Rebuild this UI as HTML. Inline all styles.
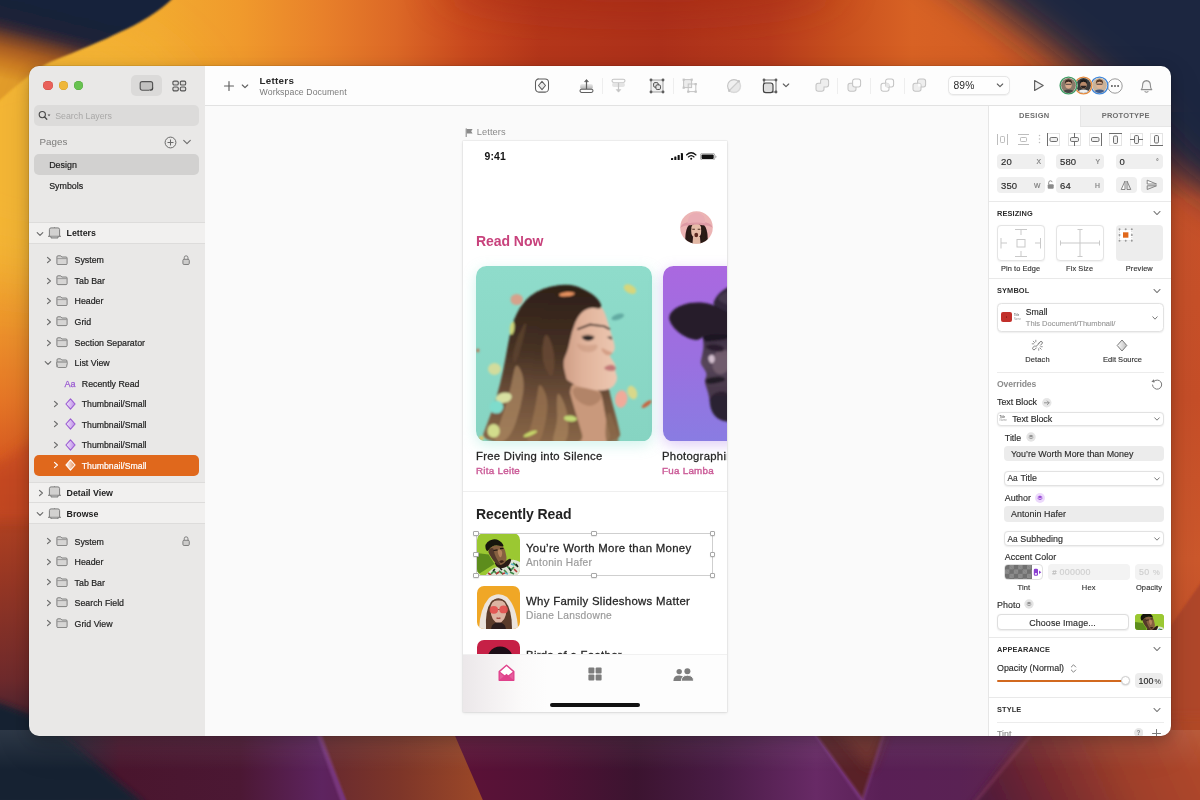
<!DOCTYPE html><html lang="en"><head><meta charset="utf-8"><title>Letters — Sketch</title><style>

html,body{margin:0;padding:0}
body{width:1200px;height:800px;overflow:hidden;position:relative;background:#7a2a30;font-family:"Liberation Sans",sans-serif;}
.b{position:absolute;display:block;box-sizing:border-box}
.t{position:absolute;white-space:nowrap;line-height:1;font-family:"Liberation Sans",sans-serif}
#win{will-change:transform;position:absolute;left:0;top:0;width:1200px;height:800px;clip-path:inset(66px 29px 64px 29px round 10px)}
#shadow{position:absolute;left:29px;top:66px;width:1142px;height:670px;border-radius:10px;box-shadow:0 0 0 .5px rgba(0,0,0,.14),0 4px 14px rgba(0,0,0,.2),0 12px 36px rgba(0,0,0,.12)}

</style></head><body>
<svg id="wall" class="b" style="left:0;top:0" width="1200" height="800" viewBox="0 0 1200 800">
<defs>
 <filter id="bl30" x="-40%" y="-40%" width="180%" height="180%"><feGaussianBlur stdDeviation="30"/></filter>
 <filter id="bl20" x="-40%" y="-40%" width="180%" height="180%"><feGaussianBlur stdDeviation="20"/></filter>
 <filter id="bl14" x="-40%" y="-40%" width="180%" height="180%"><feGaussianBlur stdDeviation="14"/></filter>
 <filter id="bl6" x="-20%" y="-20%" width="140%" height="140%"><feGaussianBlur stdDeviation="6"/></filter>
 <filter id="bl4" x="-20%" y="-30%" width="140%" height="160%"><feGaussianBlur stdDeviation="3.5"/></filter>
 <filter id="bl2" x="-10%" y="-10%" width="120%" height="120%"><feGaussianBlur stdDeviation="1.2"/></filter>
 <linearGradient id="gtop" gradientUnits="userSpaceOnUse" x1="0" y1="0" x2="1200" y2="0">
  <stop offset="0" stop-color="#f2b033"/><stop offset=".13" stop-color="#f2aa30"/><stop offset=".2" stop-color="#f09a2c"/>
  <stop offset=".27" stop-color="#e8802a"/><stop offset=".33" stop-color="#dc6826"/><stop offset=".39" stop-color="#c8481e"/>
  <stop offset=".45" stop-color="#b4361a"/><stop offset=".55" stop-color="#ac301a"/><stop offset=".64" stop-color="#b63a1c"/>
  <stop offset=".7" stop-color="#c8501e"/><stop offset=".76" stop-color="#d86224"/><stop offset=".82" stop-color="#d45e24"/><stop offset="1" stop-color="#c04a24"/>
 </linearGradient>
 <linearGradient id="gleft" gradientUnits="userSpaceOnUse" x1="0" y1="0" x2="0" y2="800">
  <stop offset="0" stop-color="#f2b234"/><stop offset=".3" stop-color="#f2ae32"/><stop offset=".4" stop-color="#ee962c"/>
  <stop offset=".5" stop-color="#e67626"/><stop offset=".57" stop-color="#d85c22"/><stop offset=".6" stop-color="#c04820"/>
  <stop offset=".72" stop-color="#9a3824"/><stop offset=".85" stop-color="#6e2a2c"/><stop offset=".895" stop-color="#4c2430"/><stop offset=".93" stop-color="#222636"/><stop offset=".96" stop-color="#1d2838"/>
 </linearGradient>
 <linearGradient id="gnavyL" gradientUnits="userSpaceOnUse" x1="25" y1="0" x2="0" y2="100">
  <stop offset="0" stop-color="#18213a"/><stop offset=".2" stop-color="#1b2238"/><stop offset=".3" stop-color="#3a2a34"/>
  <stop offset=".4" stop-color="#7a4428"/><stop offset=".5" stop-color="#aa5e22"/><stop offset=".62" stop-color="#c87822"/><stop offset=".8" stop-color="#e29c2a"/>
 </linearGradient>
 <linearGradient id="gright" gradientUnits="userSpaceOnUse" x1="0" y1="0" x2="0" y2="800">
  <stop offset="0" stop-color="#1a2440"/><stop offset=".13" stop-color="#1c2540"/><stop offset=".19" stop-color="#6a3434"/><stop offset=".25" stop-color="#c8522a"/>
  <stop offset=".5" stop-color="#c64e28"/><stop offset=".7" stop-color="#cc582c"/><stop offset="1" stop-color="#b04226"/>
 </linearGradient>
 <linearGradient id="gbot" gradientUnits="userSpaceOnUse" x1="0" y1="0" x2="1200" y2="0">
  <stop offset="0" stop-color="#1d2838"/><stop offset=".05" stop-color="#222536"/><stop offset=".1" stop-color="#4a162e"/>
  <stop offset=".2" stop-color="#4c1834"/><stop offset=".268" stop-color="#5e2460"/>
  <stop offset=".375" stop-color="#5e1238"/><stop offset=".45" stop-color="#521236"/>
  <stop offset=".53" stop-color="#3c1430"/><stop offset=".6" stop-color="#4a1c46"/><stop offset=".68" stop-color="#682a66"/>
  <stop offset=".735" stop-color="#5a2056"/><stop offset=".8" stop-color="#5a2254"/><stop offset=".87" stop-color="#62264c"/><stop offset="1" stop-color="#62264c"/>
 </linearGradient>
 <linearGradient id="gband" gradientUnits="userSpaceOnUse" x1="320" y1="0" x2="480" y2="0"><stop offset="0" stop-color="#682a30"/><stop offset=".5" stop-color="#7e3629"/><stop offset="1" stop-color="#9c4828"/></linearGradient>
 <linearGradient id="gbr" gradientUnits="userSpaceOnUse" x1="985" y1="810" x2="1190" y2="715"><stop offset="0" stop-color="#4e1a3c"/><stop offset=".3" stop-color="#74292f"/><stop offset=".65" stop-color="#a0402b"/><stop offset="1" stop-color="#b24828"/></linearGradient>
 <linearGradient id="ghaze" x1="0" y1="0" x2="0" y2="1"><stop offset="0" stop-color="#fff" stop-opacity=".10"/><stop offset="1" stop-color="#fff" stop-opacity="0"/></linearGradient>
</defs>
<rect width="1200" height="800" fill="#c8481e"/>
<rect x="0" y="0" width="150" height="800" fill="url(#gleft)"/>
<rect x="1100" y="0" width="100" height="800" fill="url(#gright)"/>
<!-- lower right curve -->
<path d="M1120 800 L1120 700 Q1160 640 1210 570 L1210 800Z" fill="#b0462a" filter="url(#bl2)"/>
<rect x="0" y="0" width="1200" height="112" fill="url(#gtop)"/>
<ellipse cx="40" cy="150" rx="150" ry="120" fill="#f4b636" filter="url(#bl30)"/>
<ellipse cx="640" cy="-14" rx="200" ry="30" fill="#a62c18" filter="url(#bl20)" opacity=".55"/>
<!-- left lower orange curve -->
<path d="M-10 470 Q20 450 60 420 L60 520 L-10 520Z" fill="#c84a20" filter="url(#bl6)" opacity=".7"/>
<!-- navy top-left -->
<path d="M-5 -5 L176 -5 C160 12 138 24 120 32 C104 40 80 50 50 62 C34 70 16 86 -5 104Z" fill="url(#gnavyL)" filter="url(#bl2)"/>
<!-- navy top-right -->
<path d="M905 -60 L1300 -60 L1300 250 L1185 172 C1130 105 1040 40 905 -60Z" fill="#1b2540" filter="url(#bl20)"/>
<!-- bottom band -->
<rect x="0" y="722" width="1200" height="80" fill="url(#gbot)"/>
<path d="M-10 700 L-10 805 L146 805 L62 736 L34 716 L8 706Z" fill="#172132" filter="url(#bl4)"/>
<path d="M313 722 L449 722 L485 805 L348 805Z" fill="url(#gband)"/>
<path d="M312 722 L317 722 L348 805 L342 805Z" fill="#84408a" filter="url(#bl2)" opacity=".7"/>
<path d="M806 722 L888 722 L863 800Z" fill="#5a2228"/>
<path d="M830 722 L888 722 L870 770Z" fill="#6e2e2a" filter="url(#bl6)"/>
<path d="M805 722 L808 722 L866 802 L861 802Z" fill="#84408a" filter="url(#bl2)" opacity=".6"/>
<path d="M886 722 L889 722 L864 802 L860 802Z" fill="#7a3a7a" filter="url(#bl2)" opacity=".6"/>
<path d="M1040 716 L1215 716 L1215 812 L966 812Z" fill="url(#gbr)" filter="url(#bl4)"/>
<path d="M1040 722 L1044 722 L975 805 L970 805Z" fill="#9a4a6a" filter="url(#bl2)" opacity=".3"/>
<rect x="0" y="730" width="1200" height="40" fill="url(#ghaze)"/>
</svg>
<div id="shadow"></div><div id="win">
<div class="b" style="left:29px;top:66px;width:176px;height:670px;background:#e9e8e7;"></div>
<div class="b" style="left:43.4px;top:80.6px;width:9.8px;height:9.8px;border-radius:50%;background:#e9615a;box-shadow:inset 0 0 0 .5px #cf4a41"></div>
<div class="b" style="left:58.5px;top:80.6px;width:9.8px;height:9.8px;border-radius:50%;background:#efb73a;box-shadow:inset 0 0 0 .5px #d59f27"></div>
<div class="b" style="left:73.6px;top:80.6px;width:9.8px;height:9.8px;border-radius:50%;background:#68c250;box-shadow:inset 0 0 0 .5px #4fa63c"></div>
<div class="b" style="left:130.5px;top:75px;width:31.5px;height:20.5px;background:#dbdad9;border-radius:5px;"></div>
<svg class="b" style="left:139px;top:79.5px;" width="15" height="12" viewBox="0 0 15 12"><rect x="1.2" y="1.6" width="12.4" height="8.6" rx="2" fill="#c2c1c0" stroke="#555" stroke-width="1.15"/><path d="M10.3 10.8 H13 Q14.3 10.8 14.3 9.5 V7.8" fill="none" stroke="#dbdad9" stroke-width="1.6"/><path d="M10.6 10.2 H11.8 Q13.6 10.2 13.6 8.4 V7.6" fill="none" stroke="#444" stroke-width="1.3"/></svg>
<svg class="b" style="left:171.5px;top:79.5px;" width="15" height="12" viewBox="0 0 15 12"><g fill="#dcdbda" stroke="#555" stroke-width="1.1"><rect x=".9" y="1.1" width="5.4" height="3.9" rx="1.3"/><rect x="8.3" y="1.1" width="5.4" height="3.9" rx="1.3"/><rect x=".9" y="7" width="5.4" height="3.9" rx="1.3"/><rect x="8.3" y="7" width="5.4" height="3.9" rx="1.3"/></g></svg>
<div class="b" style="left:34px;top:105px;width:165px;height:21px;background:#dcdbda;border-radius:5px;"></div>
<svg class="b" style="left:37.5px;top:110px;" width="14" height="11" viewBox="0 0 14 11"><circle cx="4.3" cy="4.6" r="3.1" fill="none" stroke="#4a4a4a" stroke-width="1.15"/><path d="M6.6 7 L8.8 9.3" stroke="#4a4a4a" stroke-width="1.25" stroke-linecap="round"/><path d="M9.6 4.6 L12.4 4.6 L11 6.3Z" fill="#4a4a4a"/></svg>
<div class="t" style="left:55.2px;top:112px;font-size:8.8px;color:#a9a8a7;">Search Layers</div>
<div class="t" style="left:39.5px;top:137px;font-size:9.8px;color:#7c7b7a;">Pages</div>
<svg class="b" style="left:163.5px;top:135.5px;" width="13" height="13" viewBox="0 0 13 13"><circle cx="6.5" cy="6.5" r="5.4" fill="none" stroke="#6a6a6a" stroke-width="1"/><path d="M6.5 3.9 V9.1 M3.9 6.5 H9.1" stroke="#6a6a6a" stroke-width="1" stroke-linecap="round"/></svg>
<svg class="b" style="left:181.5px;top:138.2px;" width="10" height="8" viewBox="0 0 10 8"><path d="M1.7000000000000002 2.3 L5 5.7 L8.3 2.3" fill="none" stroke="#6a6a6a" stroke-width="1.05" stroke-linecap="round" stroke-linejoin="round"/></svg>
<div class="b" style="left:34px;top:154px;width:165px;height:20.5px;background:#d2d1d0;border-radius:5px;"></div>
<div class="t" style="left:49.2px;top:161px;font-size:8.9px;color:#222;-webkit-text-stroke:.2px #222;">Design</div>
<div class="t" style="left:49.2px;top:182px;font-size:8.9px;color:#222;-webkit-text-stroke:.2px #222;">Symbols</div>
<div class="b" style="left:29px;top:222px;width:176px;height:21.5px;background:#f1f0ef;border-top:1px solid #dddcdb;border-bottom:1px solid #dddcdb;"></div>
<svg class="b" style="left:35.2px;top:229.55px;" width="10" height="8" viewBox="0 0 10 8"><path d="M2.2 2.55 L5 5.45 L7.8 2.55" fill="none" stroke="#6b6b6b" stroke-width="1.15" stroke-linecap="round" stroke-linejoin="round"/></svg>
<svg class="b" style="left:48.2px;top:227.05px;" width="13" height="11.5" viewBox="0 0 13 11.5"><path d="M1.4 9.2 V2.6 Q1.4 .9 3.1 .9 H9.9 Q11.6 .9 11.6 2.6 V9.2" fill="#d2d1d0" stroke="#777" stroke-width=".95"/><path d="M.3 9.3 H12.7" stroke="#777" stroke-width="1" stroke-linecap="round"/><path d="M3 9.6 V11 H10 V9.6" fill="#c4c4c4" stroke="#777" stroke-width=".9"/><path d="M6.5 .9 V.2" stroke="#777" stroke-width=".9"/></svg>
<div class="t" style="left:66.6px;top:229px;font-size:8.8px;color:#222;font-weight:700;">Letters</div>
<div class="b" style="left:29px;top:481.5px;width:176px;height:21.0px;background:#f1f0ef;border-top:1px solid #dddcdb;border-bottom:1px solid #dddcdb;"></div>
<svg class="b" style="left:37.6px;top:488.5px;" width="6" height="8" viewBox="0 0 6 8"><path d="M1.5 1.3 L4.4 4 L1.5 6.7" fill="none" stroke="#6b6b6b" stroke-width="1.15" stroke-linecap="round" stroke-linejoin="round"/></svg>
<svg class="b" style="left:48.2px;top:486.3px;" width="13" height="11.5" viewBox="0 0 13 11.5"><path d="M1.4 9.2 V2.6 Q1.4 .9 3.1 .9 H9.9 Q11.6 .9 11.6 2.6 V9.2" fill="#d2d1d0" stroke="#777" stroke-width=".95"/><path d="M.3 9.3 H12.7" stroke="#777" stroke-width="1" stroke-linecap="round"/><path d="M3 9.6 V11 H10 V9.6" fill="#c4c4c4" stroke="#777" stroke-width=".9"/><path d="M6.5 .9 V.2" stroke="#777" stroke-width=".9"/></svg>
<div class="t" style="left:66.6px;top:489px;font-size:8.8px;color:#222;font-weight:700;">Detail View</div>
<div class="b" style="left:29px;top:502.5px;width:176px;height:21.5px;background:#f1f0ef;border-bottom:1px solid #dddcdb;"></div>
<svg class="b" style="left:35.2px;top:510.04999999999995px;" width="10" height="8" viewBox="0 0 10 8"><path d="M2.2 2.55 L5 5.45 L7.8 2.55" fill="none" stroke="#6b6b6b" stroke-width="1.15" stroke-linecap="round" stroke-linejoin="round"/></svg>
<svg class="b" style="left:48.2px;top:507.55px;" width="13" height="11.5" viewBox="0 0 13 11.5"><path d="M1.4 9.2 V2.6 Q1.4 .9 3.1 .9 H9.9 Q11.6 .9 11.6 2.6 V9.2" fill="#d2d1d0" stroke="#777" stroke-width=".95"/><path d="M.3 9.3 H12.7" stroke="#777" stroke-width="1" stroke-linecap="round"/><path d="M3 9.6 V11 H10 V9.6" fill="#c4c4c4" stroke="#777" stroke-width=".9"/><path d="M6.5 .9 V.2" stroke="#777" stroke-width=".9"/></svg>
<div class="t" style="left:66.6px;top:510px;font-size:8.8px;color:#222;font-weight:700;">Browse</div>
<svg class="b" style="left:45.7px;top:256.0px;" width="6" height="8" viewBox="0 0 6 8"><path d="M1.5 1.3 L4.4 4 L1.5 6.7" fill="none" stroke="#6b6b6b" stroke-width="1.15" stroke-linecap="round" stroke-linejoin="round"/></svg>
<svg class="b" style="left:56.3px;top:254.6px;" width="12" height="10.5" viewBox="0 0 12 10.5"><path d="M.9 8.5 V1.9 Q.9 .8 2 .8 H4.7 L5.8 2 H10 Q11.1 2 11.1 3.1 V8.5 Q11.1 9.6 10 9.6 H2 Q.9 9.6 .9 8.5Z" fill="#d6d5d4" stroke="#7a7a7a" stroke-width=".95"/><path d="M1.2 3.6 H10.8" stroke="#8a8a8a" stroke-width=".8"/></svg>
<div class="t" style="left:74.6px;top:256px;font-size:8.8px;color:#232323;-webkit-text-stroke:.2px #232323;">System</div>
<svg class="b" style="left:182.4px;top:254.6px;" width="8.2" height="10.2" viewBox="0 0 8.2 10.2"><rect x=".9" y="4.3" width="6.4" height="5.2" rx="1.2" fill="#cdcccb" stroke="#7a7a7a" stroke-width=".95"/><path d="M2.2 4.2 V2.8 Q2.2 .8 4.1 .8 Q6 .8 6 2.8 V4.2" fill="none" stroke="#7a7a7a" stroke-width=".95"/></svg>
<svg class="b" style="left:45.7px;top:276.59999999999997px;" width="6" height="8" viewBox="0 0 6 8"><path d="M1.5 1.3 L4.4 4 L1.5 6.7" fill="none" stroke="#6b6b6b" stroke-width="1.15" stroke-linecap="round" stroke-linejoin="round"/></svg>
<svg class="b" style="left:56.3px;top:275.2px;" width="12" height="10.5" viewBox="0 0 12 10.5"><path d="M.9 8.5 V1.9 Q.9 .8 2 .8 H4.7 L5.8 2 H10 Q11.1 2 11.1 3.1 V8.5 Q11.1 9.6 10 9.6 H2 Q.9 9.6 .9 8.5Z" fill="#d6d5d4" stroke="#7a7a7a" stroke-width=".95"/><path d="M1.2 3.6 H10.8" stroke="#8a8a8a" stroke-width=".8"/></svg>
<div class="t" style="left:74.6px;top:277px;font-size:8.8px;color:#232323;-webkit-text-stroke:.2px #232323;">Tab Bar</div>
<svg class="b" style="left:45.7px;top:297.09999999999997px;" width="6" height="8" viewBox="0 0 6 8"><path d="M1.5 1.3 L4.4 4 L1.5 6.7" fill="none" stroke="#6b6b6b" stroke-width="1.15" stroke-linecap="round" stroke-linejoin="round"/></svg>
<svg class="b" style="left:56.3px;top:295.7px;" width="12" height="10.5" viewBox="0 0 12 10.5"><path d="M.9 8.5 V1.9 Q.9 .8 2 .8 H4.7 L5.8 2 H10 Q11.1 2 11.1 3.1 V8.5 Q11.1 9.6 10 9.6 H2 Q.9 9.6 .9 8.5Z" fill="#d6d5d4" stroke="#7a7a7a" stroke-width=".95"/><path d="M1.2 3.6 H10.8" stroke="#8a8a8a" stroke-width=".8"/></svg>
<div class="t" style="left:74.6px;top:297px;font-size:8.8px;color:#232323;-webkit-text-stroke:.2px #232323;">Header</div>
<svg class="b" style="left:45.7px;top:317.59999999999997px;" width="6" height="8" viewBox="0 0 6 8"><path d="M1.5 1.3 L4.4 4 L1.5 6.7" fill="none" stroke="#6b6b6b" stroke-width="1.15" stroke-linecap="round" stroke-linejoin="round"/></svg>
<svg class="b" style="left:56.3px;top:316.2px;" width="12" height="10.5" viewBox="0 0 12 10.5"><path d="M.9 8.5 V1.9 Q.9 .8 2 .8 H4.7 L5.8 2 H10 Q11.1 2 11.1 3.1 V8.5 Q11.1 9.6 10 9.6 H2 Q.9 9.6 .9 8.5Z" fill="#d6d5d4" stroke="#7a7a7a" stroke-width=".95"/><path d="M1.2 3.6 H10.8" stroke="#8a8a8a" stroke-width=".8"/></svg>
<div class="t" style="left:74.6px;top:318px;font-size:8.8px;color:#232323;-webkit-text-stroke:.2px #232323;">Grid</div>
<svg class="b" style="left:45.7px;top:338.59999999999997px;" width="6" height="8" viewBox="0 0 6 8"><path d="M1.5 1.3 L4.4 4 L1.5 6.7" fill="none" stroke="#6b6b6b" stroke-width="1.15" stroke-linecap="round" stroke-linejoin="round"/></svg>
<svg class="b" style="left:56.3px;top:337.2px;" width="12" height="10.5" viewBox="0 0 12 10.5"><path d="M.9 8.5 V1.9 Q.9 .8 2 .8 H4.7 L5.8 2 H10 Q11.1 2 11.1 3.1 V8.5 Q11.1 9.6 10 9.6 H2 Q.9 9.6 .9 8.5Z" fill="#d6d5d4" stroke="#7a7a7a" stroke-width=".95"/><path d="M1.2 3.6 H10.8" stroke="#8a8a8a" stroke-width=".8"/></svg>
<div class="t" style="left:74.6px;top:339px;font-size:8.8px;color:#232323;-webkit-text-stroke:.2px #232323;">Section Separator</div>
<svg class="b" style="left:43.3px;top:359.09999999999997px;" width="10" height="8" viewBox="0 0 10 8"><path d="M2.2 2.55 L5 5.45 L7.8 2.55" fill="none" stroke="#6b6b6b" stroke-width="1.15" stroke-linecap="round" stroke-linejoin="round"/></svg>
<svg class="b" style="left:56.3px;top:357.5px;" width="12" height="10.5" viewBox="0 0 12 10.5"><path d="M1 9.2 V1.9 Q1 .8 2.1 .8 H4.6 L5.7 2 H9.9 Q11 2 11 3.1 V4" fill="#d6d5d4" stroke="#7a7a7a" stroke-width=".95"/><path d="M1.6 4 H10.4 Q11.6 4 11.3 5.2 L10.6 8.6 Q10.4 9.6 9.3 9.6 H2.7 Q1.6 9.6 1.4 8.6 L.7 5.2 Q.4 4 1.6 4Z" fill="#d6d5d4" stroke="#7a7a7a" stroke-width=".95"/></svg>
<div class="t" style="left:74.6px;top:359px;font-size:8.8px;color:#232323;-webkit-text-stroke:.2px #232323;">List View</div>
<div class="t" style="left:64.4px;top:380px;font-size:9px;color:#9a5ad2;-webkit-text-stroke:.25px #9a5ad2;">Aa</div>
<div class="t" style="left:81.8px;top:380px;font-size:8.8px;color:#232323;-webkit-text-stroke:.2px #232323;">Recently Read</div>
<svg class="b" style="left:53.2px;top:399.9px;" width="6" height="8" viewBox="0 0 6 8"><path d="M1.5 1.3 L4.4 4 L1.5 6.7" fill="none" stroke="#6b6b6b" stroke-width="1.15" stroke-linecap="round" stroke-linejoin="round"/></svg>
<svg class="b" style="left:64.5px;top:397.9px;" width="11" height="12" viewBox="0 0 11 12"><defs><linearGradient id="dg1" x1="0" y1="0" x2="1" y2="0"><stop offset="0" stop-color="#f3e6fc"/><stop offset="1" stop-color="#b98ae6"/></linearGradient></defs><path d="M5.5 .9 L10.1 6 L5.5 11.1 L.9 6Z" fill="url(#dg1)" stroke="#9a5ad2" stroke-width="1.1" stroke-linejoin="round"/></svg>
<div class="t" style="left:81.8px;top:400px;font-size:8.7px;color:#232323;-webkit-text-stroke:.2px #232323;">Thumbnail/Small</div>
<svg class="b" style="left:53.2px;top:420.4px;" width="6" height="8" viewBox="0 0 6 8"><path d="M1.5 1.3 L4.4 4 L1.5 6.7" fill="none" stroke="#6b6b6b" stroke-width="1.15" stroke-linecap="round" stroke-linejoin="round"/></svg>
<svg class="b" style="left:64.5px;top:418.4px;" width="11" height="12" viewBox="0 0 11 12"><defs><linearGradient id="dg2" x1="0" y1="0" x2="1" y2="0"><stop offset="0" stop-color="#f3e6fc"/><stop offset="1" stop-color="#b98ae6"/></linearGradient></defs><path d="M5.5 .9 L10.1 6 L5.5 11.1 L.9 6Z" fill="url(#dg2)" stroke="#9a5ad2" stroke-width="1.1" stroke-linejoin="round"/></svg>
<div class="t" style="left:81.8px;top:421px;font-size:8.7px;color:#232323;-webkit-text-stroke:.2px #232323;">Thumbnail/Small</div>
<svg class="b" style="left:53.2px;top:440.9px;" width="6" height="8" viewBox="0 0 6 8"><path d="M1.5 1.3 L4.4 4 L1.5 6.7" fill="none" stroke="#6b6b6b" stroke-width="1.15" stroke-linecap="round" stroke-linejoin="round"/></svg>
<svg class="b" style="left:64.5px;top:438.9px;" width="11" height="12" viewBox="0 0 11 12"><defs><linearGradient id="dg3" x1="0" y1="0" x2="1" y2="0"><stop offset="0" stop-color="#f3e6fc"/><stop offset="1" stop-color="#b98ae6"/></linearGradient></defs><path d="M5.5 .9 L10.1 6 L5.5 11.1 L.9 6Z" fill="url(#dg3)" stroke="#9a5ad2" stroke-width="1.1" stroke-linejoin="round"/></svg>
<div class="t" style="left:81.8px;top:441px;font-size:8.7px;color:#232323;-webkit-text-stroke:.2px #232323;">Thumbnail/Small</div>
<div class="b" style="left:34px;top:455px;width:165px;height:20.5px;background:#e0681c;border-radius:5px;"></div>
<svg class="b" style="left:53.2px;top:461.4px;" width="6" height="8" viewBox="0 0 6 8"><path d="M1.5 1.3 L4.4 4 L1.5 6.7" fill="none" stroke="#fff" stroke-width="1.15" stroke-linecap="round" stroke-linejoin="round"/></svg>
<svg class="b" style="left:64.5px;top:459.4px;" width="11" height="12" viewBox="0 0 11 12"><defs><linearGradient id="dg4" x1="0" y1="0" x2="1" y2="0"><stop offset="0" stop-color="#fff" stop-opacity=".95"/><stop offset="1" stop-color="#fff" stop-opacity=".25"/></linearGradient></defs><path d="M5.5 .9 L10.1 6 L5.5 11.1 L.9 6Z" fill="url(#dg4)" stroke="#fff" stroke-width="1.1" stroke-linejoin="round"/></svg>
<div class="t" style="left:81.8px;top:462px;font-size:8.7px;color:#fff;-webkit-text-stroke:.2px #fff;">Thumbnail/Small</div>
<svg class="b" style="left:45.7px;top:537.3000000000001px;" width="6" height="8" viewBox="0 0 6 8"><path d="M1.5 1.3 L4.4 4 L1.5 6.7" fill="none" stroke="#6b6b6b" stroke-width="1.15" stroke-linecap="round" stroke-linejoin="round"/></svg>
<svg class="b" style="left:56.3px;top:535.9000000000001px;" width="12" height="10.5" viewBox="0 0 12 10.5"><path d="M.9 8.5 V1.9 Q.9 .8 2 .8 H4.7 L5.8 2 H10 Q11.1 2 11.1 3.1 V8.5 Q11.1 9.6 10 9.6 H2 Q.9 9.6 .9 8.5Z" fill="#d6d5d4" stroke="#7a7a7a" stroke-width=".95"/><path d="M1.2 3.6 H10.8" stroke="#8a8a8a" stroke-width=".8"/></svg>
<div class="t" style="left:74.6px;top:538px;font-size:8.8px;color:#232323;-webkit-text-stroke:.2px #232323;">System</div>
<svg class="b" style="left:182.4px;top:535.9000000000001px;" width="8.2" height="10.2" viewBox="0 0 8.2 10.2"><rect x=".9" y="4.3" width="6.4" height="5.2" rx="1.2" fill="#cdcccb" stroke="#7a7a7a" stroke-width=".95"/><path d="M2.2 4.2 V2.8 Q2.2 .8 4.1 .8 Q6 .8 6 2.8 V4.2" fill="none" stroke="#7a7a7a" stroke-width=".95"/></svg>
<svg class="b" style="left:45.7px;top:557.8000000000001px;" width="6" height="8" viewBox="0 0 6 8"><path d="M1.5 1.3 L4.4 4 L1.5 6.7" fill="none" stroke="#6b6b6b" stroke-width="1.15" stroke-linecap="round" stroke-linejoin="round"/></svg>
<svg class="b" style="left:56.3px;top:556.4000000000001px;" width="12" height="10.5" viewBox="0 0 12 10.5"><path d="M.9 8.5 V1.9 Q.9 .8 2 .8 H4.7 L5.8 2 H10 Q11.1 2 11.1 3.1 V8.5 Q11.1 9.6 10 9.6 H2 Q.9 9.6 .9 8.5Z" fill="#d6d5d4" stroke="#7a7a7a" stroke-width=".95"/><path d="M1.2 3.6 H10.8" stroke="#8a8a8a" stroke-width=".8"/></svg>
<div class="t" style="left:74.6px;top:558px;font-size:8.8px;color:#232323;-webkit-text-stroke:.2px #232323;">Header</div>
<svg class="b" style="left:45.7px;top:578.3000000000001px;" width="6" height="8" viewBox="0 0 6 8"><path d="M1.5 1.3 L4.4 4 L1.5 6.7" fill="none" stroke="#6b6b6b" stroke-width="1.15" stroke-linecap="round" stroke-linejoin="round"/></svg>
<svg class="b" style="left:56.3px;top:576.9000000000001px;" width="12" height="10.5" viewBox="0 0 12 10.5"><path d="M.9 8.5 V1.9 Q.9 .8 2 .8 H4.7 L5.8 2 H10 Q11.1 2 11.1 3.1 V8.5 Q11.1 9.6 10 9.6 H2 Q.9 9.6 .9 8.5Z" fill="#d6d5d4" stroke="#7a7a7a" stroke-width=".95"/><path d="M1.2 3.6 H10.8" stroke="#8a8a8a" stroke-width=".8"/></svg>
<div class="t" style="left:74.6px;top:579px;font-size:8.8px;color:#232323;-webkit-text-stroke:.2px #232323;">Tab Bar</div>
<svg class="b" style="left:45.7px;top:598.8000000000001px;" width="6" height="8" viewBox="0 0 6 8"><path d="M1.5 1.3 L4.4 4 L1.5 6.7" fill="none" stroke="#6b6b6b" stroke-width="1.15" stroke-linecap="round" stroke-linejoin="round"/></svg>
<svg class="b" style="left:56.3px;top:597.4000000000001px;" width="12" height="10.5" viewBox="0 0 12 10.5"><path d="M.9 8.5 V1.9 Q.9 .8 2 .8 H4.7 L5.8 2 H10 Q11.1 2 11.1 3.1 V8.5 Q11.1 9.6 10 9.6 H2 Q.9 9.6 .9 8.5Z" fill="#d6d5d4" stroke="#7a7a7a" stroke-width=".95"/><path d="M1.2 3.6 H10.8" stroke="#8a8a8a" stroke-width=".8"/></svg>
<div class="t" style="left:74.6px;top:599px;font-size:8.8px;color:#232323;-webkit-text-stroke:.2px #232323;">Search Field</div>
<svg class="b" style="left:45.7px;top:619.3000000000001px;" width="6" height="8" viewBox="0 0 6 8"><path d="M1.5 1.3 L4.4 4 L1.5 6.7" fill="none" stroke="#6b6b6b" stroke-width="1.15" stroke-linecap="round" stroke-linejoin="round"/></svg>
<svg class="b" style="left:56.3px;top:617.9000000000001px;" width="12" height="10.5" viewBox="0 0 12 10.5"><path d="M.9 8.5 V1.9 Q.9 .8 2 .8 H4.7 L5.8 2 H10 Q11.1 2 11.1 3.1 V8.5 Q11.1 9.6 10 9.6 H2 Q.9 9.6 .9 8.5Z" fill="#d6d5d4" stroke="#7a7a7a" stroke-width=".95"/><path d="M1.2 3.6 H10.8" stroke="#8a8a8a" stroke-width=".8"/></svg>
<div class="t" style="left:74.6px;top:620px;font-size:8.8px;color:#232323;-webkit-text-stroke:.2px #232323;">Grid View</div>
<div class="b" style="left:205px;top:66px;width:966px;height:39px;background:#fdfdfd;"></div>
<div class="b" style="left:205px;top:105px;width:966px;height:1px;background:#e2e2e2;"></div>
<svg class="b" style="left:223px;top:79.5px;" width="12" height="12" viewBox="0 0 12 12"><path d="M6 1.500 V10.500 M1.500 6 H10.500" stroke="#5e5e5e" stroke-width="1.15" stroke-linecap="round"/></svg>
<svg class="b" style="left:240.5px;top:82.5px;" width="8" height="7" viewBox="0 0 8 7"><path d="M1.3 2 L4 4.7 L6.7 2" fill="none" stroke="#5e5e5e" stroke-width="1.15" stroke-linecap="round" stroke-linejoin="round"/></svg>
<div class="t" style="left:259.5px;top:76px;font-size:9.8px;color:#2a2a2a;font-weight:700;letter-spacing:0.28px;">Letters</div>
<div class="t" style="left:259.6px;top:88px;font-size:8.7px;color:#7a7a7a;letter-spacing:0.1px;">Workspace Document</div>
<svg class="b" style="left:534px;top:78px;" width="16" height="15" viewBox="0 0 16 15"><rect x="1.5" y=".9" width="13" height="13.2" rx="3.4" fill="#fdfdfd" stroke="#5e5e5e" stroke-width="1.05"/><path d="M8 3.4 L11.5 7.5 L8 11.6 L4.5 7.5Z" fill="#e9e9e9" stroke="#5e5e5e" stroke-width="1.05" stroke-linejoin="round"/></svg>
<svg class="b" style="left:578.5px;top:77.5px;" width="15" height="16" viewBox="0 0 15 16"><defs><linearGradient id="fwg" x1="0" y1="0" x2="0" y2="1"><stop offset="0" stop-color="#ececec"/><stop offset="1" stop-color="#ababab"/></linearGradient></defs><rect x="1.2" y="6" width="12.6" height="5.4" rx="1.8" fill="url(#fwg)"/><rect x="1" y="11.2" width="13" height="3.2" rx="1.6" fill="#fdfdfd" stroke="#5e5e5e" stroke-width="1.05"/><path d="M7.5 11 V2.6" stroke="#5e5e5e" stroke-width="1.2"/><path d="M5.5 3.7 L7.5 1.4 L9.5 3.7Z" fill="#5e5e5e" stroke="#5e5e5e" stroke-width=".6" stroke-linejoin="round"/></svg>
<div class="b" style="left:602px;top:77.5px;width:1px;height:16px;background:#eeeeee;"></div>
<svg class="b" style="left:611px;top:77.5px;" width="15" height="16" viewBox="0 0 15 16"><rect x="1" y="1.2" width="13" height="3.2" rx="1.6" fill="#fdfdfd" stroke="#c4c4c4" stroke-width="1.05"/><rect x="1.2" y="4.4" width="12.6" height="4.6" rx="1.8" fill="#e4e4e4"/><path d="M7.5 4.8 V12.6" stroke="#c4c4c4" stroke-width="1.2"/><path d="M5.2 11.6 L7.5 14.2 L9.8 11.6Z" fill="#c4c4c4" stroke="#c4c4c4" stroke-width=".6" stroke-linejoin="round"/></svg>
<svg class="b" style="left:649px;top:77.5px;" width="16" height="16" viewBox="0 0 16 16"><rect x="2" y="2" width="12" height="12" fill="#f0f0f0" stroke="#8a8a8a" stroke-width=".8"/><g fill="#5e5e5e"><circle cx="2" cy="2" r="1.45"/><circle cx="14" cy="2" r="1.45"/><circle cx="2" cy="14" r="1.45"/><circle cx="14" cy="14" r="1.45"/></g><rect x="4.6" y="4.6" width="4.6" height="4.6" rx="1.3" fill="#e4e4e4" stroke="#4a4a4a" stroke-width=".95"/><rect x="6.9" y="6.9" width="4.6" height="4.6" rx="1.3" fill="#e4e4e4" stroke="#4a4a4a" stroke-width=".95"/></svg>
<div class="b" style="left:673px;top:77.5px;width:1px;height:16px;background:#eeeeee;"></div>
<svg class="b" style="left:682px;top:78px;" width="16" height="16" viewBox="0 0 16 16"><rect x="1.6" y="1.6" width="8" height="8" fill="#ececec" stroke="#c4c4c4" stroke-width="1"/><rect x="6.2" y="6" width="7.6" height="7.6" fill="none" stroke="#c4c4c4" stroke-width="1"/><g fill="#c4c4c4"><rect x=".6" y=".6" width="2.2" height="2.2"/><rect x="8.6" y=".6" width="2.2" height="2.2"/><rect x=".6" y="8.6" width="2.2" height="2.2"/><rect x="12.6" y="5" width="2.2" height="2.2"/><rect x="5.2" y="12.6" width="2.2" height="2.2"/><rect x="12.6" y="12.6" width="2.2" height="2.2"/></g></svg>
<svg class="b" style="left:726px;top:77.5px;" width="16" height="16" viewBox="0 0 16 16"><circle cx="8" cy="8" r="6.4" fill="#f0f0f0" stroke="#c4c4c4" stroke-width="1.1"/><path d="M3 13 L13 3" stroke="#c4c4c4" stroke-width="1.3"/><path d="M2.8 13.2 A7 7 0 0 0 13.2 2.8" fill="#e2e2e2" opacity=".6"/><circle cx="12.8" cy="3.2" r="1.2" fill="#c4c4c4"/><circle cx="3.2" cy="12.8" r="1.2" fill="#c4c4c4"/></svg>
<svg class="b" style="left:762px;top:77.5px;" width="16" height="16" viewBox="0 0 16 16"><rect x="2" y="2" width="12" height="12" fill="none" stroke="#5e5e5e" stroke-width=".9"/><rect x=".4" y=".4" width="15.2" height="15.2" fill="none"/><g fill="#5e5e5e"><circle cx="2" cy="2" r="1.4"/><circle cx="14" cy="2" r="1.4"/><circle cx="14" cy="14" r="1.4"/></g><rect x="1.4" y="5" width="9.6" height="9.6" rx="2.4" fill="#dedede" stroke="#444" stroke-width="1.15"/></svg>
<svg class="b" style="left:781.5px;top:82.2px;" width="8" height="7" viewBox="0 0 8 7"><path d="M1.3 2 L4 4.7 L6.7 2" fill="none" stroke="#5e5e5e" stroke-width="1.15" stroke-linecap="round" stroke-linejoin="round"/></svg>
<svg class="b" style="left:814.5px;top:78px;" width="15" height="15" viewBox="0 0 15 15"><path d="M7.8 1 H11.4 Q13.6 1 13.6 3.2 V6.8 Q13.6 9 11.4 9 H9 V11 Q9 13.2 6.8 13.2 H3.2 Q1 13.2 1 11 V7.4 Q1 5.2 3.2 5.2 H5.6 V3.2 Q5.6 1 7.8 1Z" fill="#eeeeee" stroke="#c4c4c4" stroke-width="1.05"/></svg>
<div class="b" style="left:836.5px;top:77.5px;width:1px;height:16px;background:#eeeeee;"></div>
<svg class="b" style="left:846.5px;top:78px;" width="15" height="15" viewBox="0 0 15 15"><g fill="#eeeeee" stroke="#c4c4c4" stroke-width="1.05"><rect x="1" y="5.2" width="8" height="8" rx="2.2"/><rect x="5.6" y="1" width="8" height="8" rx="2.2" fill="#fdfdfd"/></g></svg>
<div class="b" style="left:870px;top:77.5px;width:1px;height:16px;background:#eeeeee;"></div>
<svg class="b" style="left:880px;top:78px;" width="15" height="15" viewBox="0 0 15 15"><g fill="none" stroke="#c4c4c4" stroke-width="1.05"><rect x="5.6" y="1" width="8" height="8" rx="2.2"/><rect x="1" y="5.2" width="8" height="8" rx="2.2"/></g><rect x="5.6" y="5.2" width="3.4" height="3.8" fill="#e6e6e6"/></svg>
<div class="b" style="left:904px;top:77.5px;width:1px;height:16px;background:#eeeeee;"></div>
<svg class="b" style="left:911.5px;top:78px;" width="15" height="15" viewBox="0 0 15 15"><g fill="#eeeeee" stroke="#c4c4c4" stroke-width="1.05"><rect x="5.6" y="1" width="8" height="8" rx="2.2"/><rect x="1" y="5.2" width="8" height="8" rx="2.2"/></g><rect x="6.1" y="5.7" width="2.4" height="2.8" fill="#fdfdfd"/></svg>
<div class="b" style="left:948px;top:75.5px;width:61.5px;height:19.5px;border:1px solid #e6e6e6;border-radius:5px;background:#fefefe;box-shadow:0 .5px 1px rgba(0,0,0,.05)"></div>
<div class="t" style="left:953.5px;top:81px;font-size:10.3px;color:#2a2a2a;letter-spacing:0.1px;">89%</div>
<svg class="b" style="left:995.6px;top:82.2px;" width="8" height="7" viewBox="0 0 8 7"><path d="M1.3 2 L4 4.7 L6.7 2" fill="none" stroke="#5e5e5e" stroke-width="1.1" stroke-linecap="round" stroke-linejoin="round"/></svg>
<svg class="b" style="left:1032.5px;top:79px;" width="12" height="13" viewBox="0 0 12 13"><path d="M1.6 1.6 L10.2 6.5 L1.6 11.4Z" fill="#f0f0f0" stroke="#5e5e5e" stroke-width="1.15" stroke-linejoin="round"/></svg>
<svg class="b" style="left:1106.5px;top:77.5px;" width="16" height="16" viewBox="0 0 16 16"><circle cx="8" cy="8" r="7.2" fill="#fdfdfd" stroke="#9a9a9a" stroke-width="1"/><g fill="#555"><circle cx="4.9" cy="8" r=".95"/><circle cx="8" cy="8" r=".95"/><circle cx="11.1" cy="8" r=".95"/></g></svg>
<svg class="b" style="left:1089.5px;top:76px;" width="19" height="19" viewBox="0 0 19 19"><defs><clipPath id="av1099"><circle cx="9.5" cy="9.5" r="7.4"/></clipPath></defs><circle cx="9.5" cy="9.5" r="9.2" fill="#fdfdfd"/><circle cx="9.5" cy="9.5" r="8.4" fill="none" stroke="#3f86d9" stroke-width="1.35"/><g clip-path="url(#av1099)"><rect width="19" height="19" fill="#c9b39a"/><path d="M2.5 19 Q3 13.6 9.5 13.4 Q16 13.6 16.5 19Z" fill="#3d5a8a"/><ellipse cx="9.5" cy="8.6" rx="3.3" ry="4.1" fill="#e2b493"/><path d="M5.9 8.2 Q5.4 3.4 9.5 3.2 Q13.6 3.4 13.1 8.2 Q12.6 5.6 9.5 5.7 Q6.4 5.6 5.9 8.2Z" fill="#5a3d2a"/><path d="M6.6 8.2 H12.4" stroke="#2a2a2a" stroke-width=".9"/></g></svg>
<svg class="b" style="left:1074.1px;top:76px;" width="19" height="19" viewBox="0 0 19 19"><defs><clipPath id="av1083"><circle cx="9.5" cy="9.5" r="7.4"/></clipPath></defs><circle cx="9.5" cy="9.5" r="9.2" fill="#fdfdfd"/><circle cx="9.5" cy="9.5" r="8.4" fill="none" stroke="#e58a3c" stroke-width="1.35"/><g clip-path="url(#av1083)"><rect width="19" height="19" fill="#3a3a3a"/><path d="M2.5 19 Q3 13.6 9.5 13.4 Q16 13.6 16.5 19Z" fill="#efefef"/><ellipse cx="9.5" cy="8.6" rx="3.3" ry="4.1" fill="#b98a6a"/><path d="M5.9 8.2 Q5.4 3.4 9.5 3.2 Q13.6 3.4 13.1 8.2 Q12.6 5.6 9.5 5.7 Q6.4 5.6 5.9 8.2Z" fill="#1c1c1c"/><path d="M6.8 11 Q9.5 13.6 12.2 11 L11.8 9.8 H7.2Z" fill="#2a2220"/></g></svg>
<svg class="b" style="left:1058.5px;top:76px;" width="19" height="19" viewBox="0 0 19 19"><defs><clipPath id="av1068"><circle cx="9.5" cy="9.5" r="7.4"/></clipPath></defs><circle cx="9.5" cy="9.5" r="9.2" fill="#fdfdfd"/><circle cx="9.5" cy="9.5" r="8.4" fill="none" stroke="#3d9b62" stroke-width="1.35"/><g clip-path="url(#av1068)"><rect width="19" height="19" fill="#8a7a6a"/><path d="M2.5 19 Q3 13.6 9.5 13.4 Q16 13.6 16.5 19Z" fill="#444"/><ellipse cx="9.5" cy="8.6" rx="3.3" ry="4.1" fill="#d9ab8c"/><path d="M5.9 8.2 Q5.4 3.4 9.5 3.2 Q13.6 3.4 13.1 8.2 Q12.6 5.6 9.5 5.7 Q6.4 5.6 5.9 8.2Z" fill="#3a2a22"/><path d="M6.6 8.3 H12.4" stroke="#2a2a2a" stroke-width=".8"/></g></svg>
<svg class="b" style="left:1138.5px;top:78.5px;" width="15" height="15" viewBox="0 0 15 15"><path d="M2.2 10.6 Q3.6 9.4 3.6 6.2 Q3.6 2 7.5 1.6 Q11.4 2 11.4 6.2 Q11.4 9.4 12.8 10.6Z" fill="#f4f4f4" stroke="#8e8e8e" stroke-width="1.1" stroke-linejoin="round"/><path d="M6 12.6 Q7.5 13.8 9 12.6" fill="none" stroke="#8e8e8e" stroke-width="1.1" stroke-linecap="round"/></svg>
<div class="b" style="left:205px;top:106px;width:784px;height:630px;background:#fafafa;"></div>
<svg class="b" style="left:465.3px;top:127.5px;" width="9" height="9" viewBox="0 0 9 9"><path d="M1.2 .8 V8.4" stroke="#8a8a8a" stroke-width="1.1" stroke-linecap="round"/><path d="M1.7 1 H7.6 L6.2 3.2 L7.6 5.4 H1.7Z" fill="#8a8a8a"/></svg>
<div class="t" style="left:476.7px;top:128px;font-size:9.3px;color:#8a8a8a;letter-spacing:0.1px;">Letters</div>
<div class="b" style="left:462.5px;top:140.5px;width:264.5px;height:571.5px;background:#fff;box-shadow:0 0 0 .5px rgba(0,0,0,.08),0 1px 3px rgba(0,0,0,.10);overflow:hidden" id="ab">
<div class="b" style="left:-462.5px;top:-140.5px;width:1200px;height:800px">
<div class="t" style="left:484.6px;top:152px;font-size:10.4px;color:#111;font-weight:700;letter-spacing:0.1px;">9:41</div>
<svg class="b" style="left:671.3px;top:152.6px;" width="12.4" height="7.4" viewBox="0 0 12.4 7.4"><g fill="#111"><rect x="0" y="5" width="2.1" height="2.4" rx=".5"/><rect x="3.3" y="3.6" width="2.1" height="3.8" rx=".5"/><rect x="6.6" y="1.9" width="2.1" height="5.5" rx=".5"/><rect x="9.9" y="0" width="2.1" height="7.4" rx=".5"/></g></svg>
<svg class="b" style="left:686.4px;top:152.3px;" width="10.4" height="7.8" viewBox="0 0 10.4 7.8"><path d="M.5 2.9 Q5.2 -1.4 9.9 2.9" fill="none" stroke="#111" stroke-width="1.35" stroke-linecap="round"/><path d="M2.4 4.9 Q5.2 2.3 8 4.9" fill="none" stroke="#111" stroke-width="1.35" stroke-linecap="round"/><circle cx="5.2" cy="6.7" r="1.05" fill="#111"/></svg>
<svg class="b" style="left:700.3px;top:152.7px;" width="17" height="7.4" viewBox="0 0 17 7.4"><rect x=".4" y=".4" width="14.4" height="6.6" rx="1.9" fill="none" stroke="#111" stroke-opacity=".4" stroke-width=".8"/><rect x="1.5" y="1.5" width="12.2" height="4.4" rx="1" fill="#111"/><path d="M15.5 2.5 Q16.5 3 16.5 3.7 Q16.5 4.4 15.5 4.9Z" fill="#111" fill-opacity=".45"/></svg>
<div class="t" style="left:476px;top:234px;font-size:14px;color:#c8427c;font-weight:700;letter-spacing:-0.05px;">Read Now</div>
<svg class="b" style="left:680px;top:210.8px;" width="33" height="33" viewBox="0 0 33 33"><defs><clipPath id="hav"><circle cx="16.5" cy="16.5" r="16.3"/></clipPath><filter id="hb"><feGaussianBlur stdDeviation=".55"/></filter></defs>
<g clip-path="url(#hav)"><rect width="33" height="33" fill="#ecb4b4"/><g filter="url(#hb)">
<path d="M5.500 33 Q4.500 22 7.500 16 Q10 12 16.300 12 Q23 12 25.500 16 Q28.500 22 27.500 33Z" fill="#2c1a18"/>
<path d="M12.500 33 L13 26 H20 L20.500 33Z" fill="#e2b8a4"/>
<path d="M11 19.500 Q10.800 12.600 16.200 12.600 Q21.600 12.600 21.400 19.500 Q21.200 26.200 16.200 27.600 Q11.200 26.200 11 19.500Z" fill="#e6bca8"/>
<path d="M.5 16.500 Q2 10.500 16.500 10 Q31 10.500 32.500 16.500 Q28 13.800 22.500 14.200 Q16.500 12.600 10.500 14.200 Q5 13.800 .5 16.500Z" fill="#dd99a4"/>
<path d="M7.500 12.500 Q8 2 16.500 1.800 Q25 2 25.500 12.500 Q16.500 10.600 7.500 12.500Z" fill="#e9adb4"/>
<ellipse cx="16.250" cy="24" rx="1.900" ry="2.200" fill="#5e2c24"/>
<path d="M12.300 18.300 H14.900 M17.700 18.300 H20.300" stroke="#4a2c22" stroke-width="1.100"/>
<path d="M8 17 Q6.500 24 9 31 L12 31 Q10.500 24 11.200 17Z M25 17 Q26.500 24 24 31 L21 31 Q22.300 24 21.300 17Z" fill="#2c1a18"/>
</g></g></svg>
<div class="b" style="left:476px;top:265.5px;width:176px;height:175.5px;border-radius:10.5px;box-shadow:0 4px 14px rgba(120,220,200,.35)"></div>
<svg class="b" style="left:476px;top:265.5px;" width="176" height="175.5" viewBox="0 0 176 175.5"><defs><clipPath id="c1c"><rect width="176" height="175.5" rx="10.5"/></clipPath><filter id="c1b" x="-5%" y="-5%" width="110%" height="110%"><feGaussianBlur stdDeviation=".9"/></filter>
<linearGradient id="c1g" x1="0" y1="0" x2="0" y2="1"><stop offset="0" stop-color="#8fdccb"/><stop offset="1" stop-color="#86d4c2"/></linearGradient>
<linearGradient id="hrg" x1="0" y1="0" x2="0" y2="1"><stop offset="0" stop-color="#2e2018"/><stop offset=".4" stop-color="#463124"/><stop offset=".7" stop-color="#6e503a"/><stop offset="1" stop-color="#8a6848"/></linearGradient>
<linearGradient id="fcg" x1="0" y1="0" x2="1" y2="0"><stop offset="0" stop-color="#c4927a"/><stop offset=".45" stop-color="#e0b29a"/><stop offset="1" stop-color="#edc8b2"/></linearGradient></defs>
<g clip-path="url(#c1c)"><rect width="176" height="175.5" fill="url(#c1g)"/><g filter="url(#c1b)">
<ellipse cx="40.7" cy="33.5" rx="6.2" ry="5.6" fill="#d6a28c" transform="rotate(0 40.7 33.5)"/><ellipse cx="154.0" cy="23.1" rx="6.7" ry="4.2" fill="#d6d67c" transform="rotate(28 154.0 23.1)"/><ellipse cx="141.8" cy="50.9" rx="6.5" ry="2.8" fill="#62aaa2" transform="rotate(-18 141.8 50.9)"/><ellipse cx="18.5" cy="102.9" rx="6.5" ry="6.0" fill="#d2dc9c" transform="rotate(0 18.5 102.9)"/>
<path d="M74.1 20.7 Q86.3 18.0 94.4 19.1 Q102.5 20.1 111.1 25.4 Q119.8 30.8 123.3 39.1 Q126.7 47.4 125.0 59.0 Q123.3 70.5 127.9 97.1 Q132.5 123.7 137.1 139.9 Q141.8 156.1 144.1 167.7 Q146.4 179.2 74.7 179.2 Q3.0 179.2 7.4 167.7 Q11.8 156.1 16.4 143.4 Q21.0 130.7 24.3 116.8 Q27.5 102.9 29.6 91.4 Q31.7 79.8 34.0 68.0 Q36.3 56.2 41.2 46.7 Q46.0 37.2 54.0 30.3 Q62.0 23.4 74.1 20.7 Z" fill="url(#hrg)"/>
<path d="M94.4 123.7 Q95.5 114.5 109.4 118.5 Q123.3 122.6 125.0 127.8 Q126.7 133.0 128.5 144.5 Q130.2 156.1 133.7 167.7 Q137.1 179.2 107.1 179.2 Q77.0 179.2 84.0 167.7 Q90.9 156.1 92.0 144.5 Q93.2 133.0 94.4 123.7 Z" fill="#c9997c"/>
<path d="M105.9 42.2 Q114.0 34.7 120.4 37.6 Q126.7 40.5 129.4 48.6 Q132.1 56.7 133.0 60.1 Q133.9 63.6 136.7 72.3 Q139.5 80.9 138.5 83.8 Q137.6 86.7 135.1 87.9 Q132.5 89.0 136.2 93.7 Q139.9 98.3 139.5 101.8 Q139.0 105.2 140.4 108.7 Q141.8 112.2 140.0 116.2 Q138.3 120.3 134.3 122.6 Q130.2 124.9 122.1 124.3 Q114.0 123.7 105.9 121.4 Q97.8 119.1 92.0 114.5 Q86.3 109.9 80.5 106.4 Q74.7 102.9 79.3 94.8 Q84.0 86.7 87.4 77.5 Q90.9 68.2 94.4 59.0 Q97.8 49.7 105.9 42.2 Z" fill="url(#fcg)"/>
<path d="M96.7 126.0 Q95.5 119.1 109.4 122.0 Q123.3 124.9 125.0 128.9 Q126.7 133.0 120.4 137.6 Q114.0 142.2 105.9 137.6 Q97.8 133.0 96.7 126.0 Z" fill="#a87a60" opacity=".7"/>
<path d="M82.8 26.0 Q90.9 20.8 100.1 22.0 Q109.4 23.1 116.3 28.3 Q123.3 33.5 125.0 38.7 Q126.7 43.9 120.4 42.2 Q114.0 40.5 108.2 44.5 Q102.5 48.6 99.0 57.2 Q95.5 65.9 93.8 75.2 Q92.0 84.4 89.2 90.2 Q86.3 96.0 88.6 105.2 Q90.9 114.5 93.2 123.7 Q95.5 133.0 99.0 144.5 Q102.5 156.1 105.9 167.7 Q109.4 179.2 86.3 179.2 Q63.1 179.2 58.5 167.7 Q53.9 156.1 52.7 144.5 Q51.6 133.0 53.9 119.1 Q56.2 105.2 57.4 92.5 Q58.5 79.8 60.8 65.9 Q63.1 52.0 68.9 41.6 Q74.7 31.2 82.8 26.0 Z" fill="url(#hrg)"/>
<path d="M37.7 106.4 Q40.0 93.7 44.6 104.1 Q49.3 114.5 46.9 128.4 Q44.6 142.2 40.0 156.1 Q35.4 170.0 28.4 174.6 Q21.5 179.2 19.2 178.1 Q16.9 176.9 22.7 160.7 Q28.4 144.5 31.9 131.8 Q35.4 119.1 37.7 106.4 Z" fill="#a88460" opacity=".75"/><path d="M62.0 123.7 Q63.1 114.5 67.8 123.7 Q72.4 133.0 71.2 144.5 Q70.1 156.1 66.6 167.7 Q63.1 179.2 56.2 179.2 Q49.3 179.2 52.7 167.7 Q56.2 156.1 58.5 144.5 Q60.8 133.0 62.0 123.7 Z" fill="#9c7652" opacity=".7"/>
<path d="M81.1 130.7 Q81.6 123.7 86.3 133.0 Q90.9 142.2 92.0 153.8 Q93.2 165.4 90.9 172.3 Q88.6 179.2 81.6 179.2 Q74.7 179.2 78.2 167.7 Q81.6 156.1 81.1 146.9 Q80.5 137.6 81.1 130.7 Z" fill="#b08a62" opacity=".6"/>
<path d="M46.4 61.3 Q51.6 52.0 49.3 63.6 Q46.9 75.2 43.5 86.7 Q40.0 98.3 37.7 96.0 Q35.4 93.7 38.3 82.1 Q41.2 70.5 46.4 61.3 Z" fill="#5e4430" opacity=".8"/>
<path d="M130.8 151.5 Q132.5 142.2 136.0 151.5 Q139.5 160.7 141.8 170.0 Q144.1 179.2 137.1 179.2 Q130.2 179.2 129.6 170.0 Q129.0 160.7 130.8 151.5 Z" fill="#8a6848" opacity=".8"/>
<path d="M67.8 72.8 Q70.1 63.6 74.7 75.2 Q79.3 86.7 78.2 100.6 Q77.0 114.5 72.4 107.5 Q67.8 100.6 66.6 91.4 Q65.4 82.1 67.8 72.8 Z" fill="#6a4a34" opacity=".8"/>
<path d="M102.0 63.1 L114.0 58.5 L128.4 60.4 L133.4 63.1 " fill="none" stroke="#3a2a22" stroke-width="1.9" stroke-linecap="round" opacity=".9"/>
<path d="M101.9 80.9 Q99.0 76.3 104.2 78.3 Q109.4 80.2 116.3 78.9 Q123.3 77.5 121.0 82.1 Q118.6 86.7 111.7 86.1 Q104.8 85.6 101.9 80.9 Z" fill="#c9987e" opacity=".55"/>
<path d="M107.7 72.6 Q102.5 70.5 107.1 68.9 Q111.7 67.3 116.6 69.1 Q121.4 71.0 117.1 72.8 Q112.9 74.7 107.7 72.6 Z" fill="#8a6a5a" opacity=".6"/>
<path d="M108.2 73.7 Q104.3 71.7 108.0 70.2 Q111.7 68.7 115.7 70.2 Q119.8 71.7 116.0 73.7 Q112.2 75.6 108.2 73.7 Z" fill="#2a2626"/>
<path d="M130.7 71.0 L135.3 70.5 L136.2 74.0 Z" fill="#2a2626"/>
<path d="M129.0 103.3 Q126.7 101.8 131.0 99.8 Q135.3 97.8 137.8 99.4 Q140.4 101.1 139.7 103.1 Q139.0 105.2 135.2 105.0 Q131.4 104.8 129.0 103.3 Z" fill="#c27878"/>
<path d="M125.6 83.8 Q125.1 80.9 128.8 83.3 Q132.5 85.6 135.1 86.1 Q137.6 86.7 135.1 88.5 Q132.5 90.2 129.3 88.5 Q126.0 86.7 125.6 83.8 Z" fill="#d49f86"/>
<ellipse cx="90.9" cy="28.2" rx="7.9" ry="2.1" fill="#e8925e" transform="rotate(-5 90.9 28.2)"/><ellipse cx="36.1" cy="62.4" rx="2.3" ry="6.5" fill="#cdd67a" transform="rotate(8 36.1 62.4)"/>
<ellipse cx="27.8" cy="131.8" rx="8.1" ry="5.1" fill="#d8e0a2" transform="rotate(-12 27.8 131.8)"/><ellipse cx="20.4" cy="141.1" rx="6.9" ry="6.5" fill="#7edccc" transform="rotate(0 20.4 141.1)"/><ellipse cx="17.6" cy="164.9" rx="6.2" ry="6.9" fill="#d2dc8c" transform="rotate(0 17.6 164.9)"/>
<ellipse cx="94.4" cy="152.6" rx="6.5" ry="3.0" fill="#c2d874" transform="rotate(5 94.4 152.6)"/><ellipse cx="54.3" cy="167.7" rx="7.4" ry="1.9" fill="#c8d86a" transform="rotate(-22 54.3 167.7)"/>
<ellipse cx="145.2" cy="133.0" rx="6.2" ry="8.8" fill="#f0aa9a" transform="rotate(8 145.2 133.0)"/><ellipse cx="156.3" cy="126.5" rx="4.6" ry="6.9" fill="#d8d88a" transform="rotate(-22 156.3 126.5)"/><ellipse cx="170.7" cy="138.1" rx="6.0" ry="1.9" fill="#c8623c" transform="rotate(-35 170.7 138.1)"/>
<ellipse cx="1.9" cy="84.4" rx="1.4" ry="1.9" fill="#c06a4a" transform="rotate(0 1.9 84.4)"/><ellipse cx="5.3" cy="172.3" rx="2.3" ry="2.3" fill="#e0c060" transform="rotate(0 5.3 172.3)"/>
</g></g></svg>
<div class="b" style="left:662.5px;top:265.5px;width:176px;height:175.5px;border-radius:10.5px;box-shadow:0 4px 14px rgba(160,110,230,.35)"></div>
<svg class="b" style="left:662.5px;top:265.5px;" width="176" height="175.5" viewBox="0 0 176 175.5"><defs><clipPath id="c2c"><rect width="176" height="175.5" rx="10.5"/></clipPath><filter id="c2b" x="-5%" y="-5%" width="110%" height="110%"><feGaussianBlur stdDeviation=".9"/></filter>
<linearGradient id="c2g" x1="0" y1="0" x2="0" y2="1"><stop offset="0" stop-color="#aa68e0"/><stop offset=".55" stop-color="#9a70e0"/><stop offset="1" stop-color="#897ce2"/></linearGradient>
<linearGradient id="mfg" x1="0" y1="0" x2="0" y2="1"><stop offset="0" stop-color="#34283a"/><stop offset=".35" stop-color="#57465a"/><stop offset=".6" stop-color="#4a3a4c"/><stop offset="1" stop-color="#34283c"/></linearGradient></defs>
<g clip-path="url(#c2c)"><rect width="176" height="175.5" fill="url(#c2g)"/><g filter="url(#c2b)">
<path d="M40.1 73.5 Q39.3 67.8 50.3 65.7 Q61.3 63.6 76.3 63.6 Q91.4 63.6 91.4 112.2 Q91.4 160.7 77.5 158.4 Q63.6 156.1 58.7 154.3 Q53.9 152.4 50.6 147.9 Q47.4 143.4 46.9 137.3 Q46.5 131.1 44.9 126.0 Q43.2 121.0 42.3 117.7 Q41.4 114.5 42.8 111.5 Q44.2 108.5 42.7 105.7 Q41.2 102.9 39.1 100.1 Q37.0 97.4 38.2 93.2 Q39.3 89.0 40.1 84.2 Q40.9 79.3 40.1 73.5 Z" fill="url(#mfg)"/>
<path d="M49.7 94.2 Q50.9 85.6 58.4 83.8 Q65.9 82.1 67.1 92.5 Q68.2 102.9 62.4 106.4 Q56.7 109.9 52.6 106.4 Q48.6 102.9 49.7 94.2 Z" fill="#7a6474" opacity=".75"/>
<path d="M46.1 94.8 Q44.2 90.9 47.2 89.3 Q50.2 87.7 51.3 90.9 Q52.5 94.1 50.3 96.4 Q48.1 98.8 46.1 94.8 Z" fill="#d8c4d4" opacity=".95"/>
<path d="M44.2 82.6 Q40.9 80.2 45.3 78.9 Q49.7 77.5 55.5 78.9 Q61.3 80.2 61.3 83.3 Q61.3 86.3 54.3 85.6 Q47.4 84.9 44.2 82.6 Z" fill="#261c2a" opacity=".9"/>
<path d="M42.6 115.2 Q41.9 112.6 50.4 111.0 Q59.0 109.4 61.5 111.9 Q64.1 114.5 56.9 116.3 Q49.7 118.2 46.5 117.9 Q43.2 117.7 42.6 115.2 Z" fill="#241a28"/>
<path d="M46.9 136.4 Q46.5 129.5 53.9 126.6 Q61.3 123.7 65.9 128.4 Q70.5 133.0 69.4 144.5 Q68.2 156.1 61.3 154.7 Q54.3 153.3 50.9 148.4 Q47.4 143.4 46.9 136.4 Z" fill="#2a2030" opacity=".9"/>
<path d="M39.9 71.7 Q39.3 67.8 50.3 65.7 Q61.3 63.6 64.8 68.2 Q68.2 72.8 59.0 74.0 Q49.7 75.2 45.1 75.4 Q40.5 75.6 39.9 71.7 Z" fill="#1e1624"/>
<path d="M56.1 43.5 Q49.3 40.0 50.9 35.6 Q52.5 31.2 56.0 27.8 Q59.4 24.3 63.8 21.7 Q68.2 19.2 79.8 17.7 Q91.4 16.2 91.4 34.1 Q91.4 52.0 77.1 49.5 Q62.9 46.9 56.1 43.5 Z" fill="#30263a"/>
<path d="M60.4 37.0 Q52.5 33.5 56.9 29.5 Q61.3 25.4 76.3 22.0 Q91.4 18.5 91.4 31.2 Q91.4 43.9 79.8 42.2 Q68.2 40.5 60.4 37.0 Z" fill="#4e4056" opacity=".7"/>
<path d="M6.5 54.1 Q5.3 50.2 8.1 46.5 Q10.9 42.8 15.8 40.5 Q20.8 38.2 26.6 37.1 Q32.4 36.1 38.2 36.5 Q43.9 37.0 48.6 38.5 Q53.2 40.0 58.4 43.2 Q63.6 46.5 77.5 49.8 Q91.4 53.2 91.4 63.6 Q91.4 74.0 76.3 70.9 Q61.3 67.8 51.5 68.2 Q41.6 68.7 38.7 71.8 Q35.8 74.9 30.1 73.5 Q24.3 72.2 19.4 69.0 Q14.6 65.9 11.1 62.0 Q7.6 58.0 6.5 54.1 Z" fill="#251c2c"/>
</g></g></svg>
<div class="t" style="left:476px;top:451px;font-size:11.3px;color:#262626;letter-spacing:0.3px;-webkit-text-stroke:.28px #262626;">Free Diving into Silence</div>
<div class="t" style="left:476px;top:466px;font-size:9.8px;color:#cb5c98;letter-spacing:0.27px;-webkit-text-stroke:.4px #cb5c98;">Rita Leite</div>
<div class="t" style="left:662px;top:451px;font-size:11.3px;color:#262626;letter-spacing:0.3px;-webkit-text-stroke:.28px #262626;">Photographing the Night</div>
<div class="t" style="left:662px;top:466px;font-size:9.8px;color:#cb5c98;letter-spacing:0.27px;-webkit-text-stroke:.4px #cb5c98;">Fua Lamba</div>
<div class="b" style="left:462px;top:491px;width:266px;height:1px;background:#efefef;"></div>
<div class="t" style="left:476px;top:507px;font-size:14px;color:#222;font-weight:700;letter-spacing:-0.08px;">Recently Read</div>
<svg class="b" style="left:476.5px;top:533px;" width="43" height="43" viewBox="0 0 43 43"><defs><clipPath id="t1c"><rect width="43" height="43" rx="7"/></clipPath><filter id="tb"><feGaussianBlur stdDeviation=".5"/></filter></defs>
<g clip-path="url(#t1c)"><g id="th1g"><rect width="43" height="43" fill="#9bc832"/><g filter="url(#tb)">
<path d="M-0.1 20.1 L11.6 21.6 L17.6 30.9 L2.9 40.2 L-0.1 39.0Z" fill="#5d8d1f"/>
<path d="M26.0 45.0 Q6.5 45.0 8.9 42.0 Q11.3 39.0 14.9 36.3 Q18.5 33.6 22.1 34.5 Q25.7 35.4 29.6 30.9 Q33.5 26.4 36.5 26.7 Q39.5 27.0 42.5 28.8 Q45.5 30.6 45.5 37.8 Q45.5 45.0 26.0 45.0 Z" fill="#dfe6d6"/>
<path d="M14 41 l3 -3 l3 3 M22 38 l4 3 M30 33 l4 4 l3 -3 M36 30 l4 3 M27 37 l3 3 M33 39 l4 2" stroke="#3f8a4a" stroke-width="1.700" fill="none"/>
<path d="M11 40 l3 2 M19 41 l3 -2 M29 30 l3 2 M37 36 l3 3 M25 41 l3 -1" stroke="#b23838" stroke-width="1.600" fill="none"/>
<path d="M16 38 l2 -2 M32 35 l2 3 M39 31 l2 3 M23 35 l2 2" stroke="#1e1e1e" stroke-width="1.500"/>
<path d="M34 31 l3 1 M28 40 l3 1" stroke="#5ab0c8" stroke-width="1.400"/>
<path d="M17.9 30.6 Q17.3 28.2 20.0 29.4 Q22.7 30.6 25.7 29.4 Q28.7 28.2 30.8 26.7 Q32.9 25.2 33.8 26.1 Q34.7 27.0 33.2 30.0 Q31.7 33.0 27.8 34.5 Q23.9 36.0 21.2 34.5 Q18.5 33.0 17.9 30.6 Z" fill="#2a1c18"/>
<path d="M12.6 21.6 Q10.8 18.6 12.0 16.5 Q13.2 14.4 15.6 13.2 Q17.9 12.0 20.9 12.3 Q23.9 12.6 25.7 13.8 Q27.5 15.0 28.2 18.0 Q28.8 21.0 29.4 23.4 Q29.9 25.8 28.7 28.2 Q27.5 30.6 25.1 31.6 Q22.7 32.5 20.3 31.0 Q17.9 29.4 16.1 27.0 Q14.3 24.6 12.6 21.6 Z" fill="#86603f"/>
<path d="M12.6 21.6 Q10.8 18.6 12.0 16.8 Q13.2 15.0 15.0 15.0 Q16.7 15.0 17.0 18.0 Q17.3 21.0 18.8 24.0 Q20.3 27.0 22.1 29.4 Q23.9 31.8 22.7 32.1 Q21.5 32.4 19.7 30.9 Q17.9 29.4 16.1 27.0 Q14.3 24.6 12.6 21.6 Z" fill="#4e3428" opacity=".9"/>
<path d="M20.9 19.8 Q20.3 16.8 22.1 16.5 Q23.9 16.2 24.8 18.0 Q25.7 19.8 24.8 22.5 Q23.9 25.2 22.7 24.0 Q21.5 22.8 20.9 19.8 Z" fill="#c08c64" opacity=".8"/>
<path d="M9.7 17.8 Q8.6 16.8 8.4 14.1 Q8.2 11.4 10.3 9.3 Q12.5 7.2 15.8 6.5 Q19.1 5.9 21.9 7.4 Q24.8 9.0 26.0 11.5 Q27.2 14.1 25.5 13.4 Q23.9 12.7 20.9 12.4 Q17.9 12.1 15.6 13.3 Q13.2 14.5 12.0 16.6 Q10.8 18.7 9.7 17.8 Z" fill="#15120e"/>
<path d="M16.500 17.500 l4 -.6 M23 15.600 l3.500 -.2" stroke="#1c130f" stroke-width="1.200"/>
<path d="M22.7 29.3 Q21.5 28.2 23.6 27.6 Q25.7 27.0 26.6 27.9 Q27.5 28.8 25.7 29.6 Q23.9 30.4 22.7 29.3 Z" fill="#3a2018"/>
</g></g></g></svg>
<svg class="b" style="left:476.5px;top:586.3px;" width="43" height="43" viewBox="0 0 43 43"><defs><clipPath id="t2c"><rect width="43" height="43" rx="7"/></clipPath></defs>
<g clip-path="url(#t2c)"><rect width="43" height="43" fill="#f0a726"/><g filter="url(#tb)">
<path d="M2 43 Q3 22 12 12 Q21 5 30 11 Q40 21 41 43Z" fill="#ece4dc"/>
<path d="M9 43 Q8 24 14 16 Q21 9 28 15 Q35 23 35 43Z" fill="#5a3a2a"/>
<path d="M13.5 24 Q13 14.5 21.5 14 Q30 14.5 29.5 24 Q29 35 21.5 37.5 Q14 35 13.500 24Z" fill="#dcb4a2"/>
<path d="M13 17 Q21 9 30 17 Q26 13.500 21.500 14.500 Q17 13.500 13 17Z" fill="#6e4632"/>
<path d="M14 43 Q15 36 21.500 36.500 Q28 36 29 43Z" fill="#2a1e1c"/>
<ellipse cx="16.800" cy="23.800" rx="4.300" ry="3.900" fill="#e2504e" opacity=".92"/><ellipse cx="26.600" cy="23.400" rx="4.300" ry="3.900" fill="#e2504e" opacity=".92"/>
<path d="M21 23.500 h1.500" stroke="#8a3030" stroke-width=".8"/>
<path d="M19.500 31.800 q2 1 4 0" stroke="#a8504a" stroke-width="1.300" fill="none"/>
</g></g></svg>
<svg class="b" style="left:476.5px;top:639.5px;" width="43" height="43" viewBox="0 0 43 43"><defs><clipPath id="t3c"><rect width="43" height="43" rx="7"/></clipPath></defs>
<g clip-path="url(#t3c)"><rect width="43" height="43" fill="#c62046"/><g filter="url(#tb)"><path d="M7 43 Q6 14 17 8 Q26 4 33 11 Q40 20 37 43Z" fill="#1a0f14"/></g></g></svg>
<div class="t" style="left:526px;top:543px;font-size:11.4px;color:#262626;letter-spacing:0.3px;-webkit-text-stroke:.28px #262626;">You’re Worth More than Money</div>
<div class="t" style="left:526px;top:558px;font-size:10.2px;color:#9c9c9c;letter-spacing:0.3px;-webkit-text-stroke:.2px #9c9c9c;">Antonin Hafer</div>
<div class="t" style="left:526px;top:596px;font-size:11.4px;color:#262626;letter-spacing:0.3px;-webkit-text-stroke:.28px #262626;">Why Family Slideshows Matter</div>
<div class="t" style="left:526px;top:611px;font-size:10.2px;color:#9c9c9c;letter-spacing:0.3px;-webkit-text-stroke:.2px #9c9c9c;">Diane Lansdowne</div>
<div class="t" style="left:526px;top:650px;font-size:11.4px;color:#262626;letter-spacing:0.3px;-webkit-text-stroke:.28px #262626;">Birds of a Feather</div>
<div class="b" style="left:462px;top:654.5px;width:266px;height:58px;background:linear-gradient(90deg,#ebe7e9 0,#f3f0f1 28px,#fbfafa 60px,#fdfdfd 85px)"></div>
<div class="b" style="left:462px;top:654px;width:266px;height:1px;background:#f1f1f1;"></div>
<svg class="b" style="left:497.5px;top:663.5px;" width="17" height="18" viewBox="0 0 17 18"><path d="M1.2 7.6 L8.5 1.2 L15.8 7.6 V16.2 H1.2Z" fill="#fff" stroke="#e0428c" stroke-width="1.4" stroke-linejoin="round"/><path d="M1.6 16 L8.5 9.8 L15.4 16Z" fill="#e0428c"/><path d="M1.4 8 L8.5 13.600 L15.600 8" fill="none" stroke="#e0428c" stroke-width="1.300"/><path d="M1.300 8.200 L8.500 13.800 L15.700 8.200 V16.200 H1.300Z" fill="#e0428c" opacity=".85"/></svg>
<svg class="b" style="left:587.5px;top:666.8px;" width="14" height="14" viewBox="0 0 14 14"><g fill="#7d7d7d"><rect x=".4" y=".4" width="6" height="6" rx="1"/><rect x="7.600" y=".4" width="6" height="6" rx="1"/><rect x=".4" y="7.600" width="6" height="6" rx="1"/><rect x="7.600" y="7.600" width="6" height="6" rx="1"/></g></svg>
<svg class="b" style="left:672.5px;top:667.5px;" width="21" height="13.5" viewBox="0 0 21 13.5"><g fill="#7d7d7d"><circle cx="6.200" cy="3.600" r="2.700"/><path d="M.4 13 Q.4 7.600 6.200 7.600 Q9.400 7.600 10.800 9.300 Q9.300 10.800 9.200 13Z"/><circle cx="14.400" cy="3.300" r="3"/><path d="M8.300 13.200 Q8.300 7.300 14.400 7.300 Q20.600 7.300 20.600 13.200Z" stroke="#fbfbfb" stroke-width=".9"/></g></svg>
<div class="b" style="left:549.5px;top:703.2px;width:90px;height:3.6px;background:#111;border-radius:2px;"></div>
</div></div>
<div class="b" style="left:475.5px;top:533px;width:237.500px;height:43px;border:1px solid #cfcfcf"></div>
<div class="b" style="left:473.09999999999997px;top:530.6px;width:5.600px;height:5.600px;background:#fff;border:.8px solid #a8a8a8;border-radius:1px;box-shadow:0 .5px 1px rgba(0,0,0,.15)"></div>
<div class="b" style="left:473.09999999999997px;top:551.7px;width:5.600px;height:5.600px;background:#fff;border:.8px solid #a8a8a8;border-radius:1px;box-shadow:0 .5px 1px rgba(0,0,0,.15)"></div>
<div class="b" style="left:473.09999999999997px;top:572.8000000000001px;width:5.600px;height:5.600px;background:#fff;border:.8px solid #a8a8a8;border-radius:1px;box-shadow:0 .5px 1px rgba(0,0,0,.15)"></div>
<div class="b" style="left:591.4000000000001px;top:530.6px;width:5.600px;height:5.600px;background:#fff;border:.8px solid #a8a8a8;border-radius:1px;box-shadow:0 .5px 1px rgba(0,0,0,.15)"></div>
<div class="b" style="left:591.4000000000001px;top:572.8000000000001px;width:5.600px;height:5.600px;background:#fff;border:.8px solid #a8a8a8;border-radius:1px;box-shadow:0 .5px 1px rgba(0,0,0,.15)"></div>
<div class="b" style="left:709.8000000000001px;top:530.6px;width:5.600px;height:5.600px;background:#fff;border:.8px solid #a8a8a8;border-radius:1px;box-shadow:0 .5px 1px rgba(0,0,0,.15)"></div>
<div class="b" style="left:709.8000000000001px;top:551.7px;width:5.600px;height:5.600px;background:#fff;border:.8px solid #a8a8a8;border-radius:1px;box-shadow:0 .5px 1px rgba(0,0,0,.15)"></div>
<div class="b" style="left:709.8000000000001px;top:572.8000000000001px;width:5.600px;height:5.600px;background:#fff;border:.8px solid #a8a8a8;border-radius:1px;box-shadow:0 .5px 1px rgba(0,0,0,.15)"></div>
<div class="b" style="left:988px;top:106px;width:183px;height:630px;background:#ffffff;border-left:1px solid #e6e6e6;"></div>
<div class="b" style="left:1080px;top:106px;width:91px;height:20.5px;background:#f0f0f0;border-left:1px solid #e6e6e6;border-bottom:1px solid #e6e6e6;"></div>
<div class="t" style="left:1034.3px;top:112px;font-size:7.5px;color:#6e6e6e;font-weight:700;letter-spacing:0.28px;transform:translateX(-50%);">DESIGN</div>
<div class="t" style="left:1125.7px;top:112px;font-size:7.5px;color:#6e6e6e;font-weight:700;letter-spacing:0.2px;transform:translateX(-50%);">PROTOTYPE</div>
<svg class="b" style="left:996px;top:133px;" width="13" height="13" viewBox="0 0 13 13"><path d="M1.500 1 V12 M11.500 1 V12" stroke="#bdbdbd" stroke-width="1"/><rect x="4.500" y="3.500" width="4" height="6" rx=".8" fill="none" stroke="#bdbdbd" stroke-width="1"/></svg>
<svg class="b" style="left:1017px;top:133px;" width="13" height="13" viewBox="0 0 13 13"><path d="M1 1.500 H12 M1 11.500 H12" stroke="#bdbdbd" stroke-width="1"/><rect x="3.500" y="4.500" width="6" height="4" rx=".8" fill="none" stroke="#bdbdbd" stroke-width="1"/></svg>
<svg class="b" style="left:1037.5px;top:134px;" width="3" height="10" viewBox="0 0 3 10"><g fill="#bdbdbd"><circle cx="1.500" cy="1.500" r=".75"/><circle cx="1.500" cy="5" r=".75"/><circle cx="1.500" cy="8.500" r=".75"/></g></svg>
<svg class="b" style="left:1047px;top:133px;" width="13" height="13" viewBox="0 0 13 13"><rect x=".5" y=".5" width="12" height="12" fill="#fff" stroke="#e4e4e4" stroke-width="1"/><path d="M.5 0 V13" stroke="#6e6e6e" stroke-width="1"/><rect x="3" y="4.500" width="7.500" height="4" rx="1.200" fill="#efefef" stroke="#6e6e6e" stroke-width="1"/></svg>
<svg class="b" style="left:1068px;top:133px;" width="13" height="13" viewBox="0 0 13 13"><rect x=".5" y=".5" width="12" height="12" fill="#fff" stroke="#e4e4e4" stroke-width="1"/><path d="M6.500 0 V13" stroke="#6e6e6e" stroke-width="1"/><rect x="2.500" y="4.500" width="8" height="4" rx="1.200" fill="#efefef" stroke="#6e6e6e" stroke-width="1"/></svg>
<svg class="b" style="left:1089px;top:133px;" width="13" height="13" viewBox="0 0 13 13"><rect x=".5" y=".5" width="12" height="12" fill="#fff" stroke="#e4e4e4" stroke-width="1"/><path d="M12.500 0 V13" stroke="#6e6e6e" stroke-width="1"/><rect x="2.500" y="4.500" width="7.500" height="4" rx="1.200" fill="#efefef" stroke="#6e6e6e" stroke-width="1"/></svg>
<svg class="b" style="left:1109px;top:133px;" width="13" height="13" viewBox="0 0 13 13"><rect x=".5" y=".5" width="12" height="12" fill="#fff" stroke="#e4e4e4" stroke-width="1"/><path d="M0 .5 H13" stroke="#6e6e6e" stroke-width="1"/><rect x="4.500" y="3" width="4" height="7.500" rx="1.200" fill="#efefef" stroke="#6e6e6e" stroke-width="1"/></svg>
<svg class="b" style="left:1130px;top:133px;" width="13" height="13" viewBox="0 0 13 13"><rect x=".5" y=".5" width="12" height="12" fill="#fff" stroke="#e4e4e4" stroke-width="1"/><path d="M0 6.500 H13" stroke="#6e6e6e" stroke-width="1"/><rect x="4.500" y="2.500" width="4" height="8" rx="1.200" fill="#efefef" stroke="#6e6e6e" stroke-width="1"/></svg>
<svg class="b" style="left:1150px;top:133px;" width="13" height="13" viewBox="0 0 13 13"><rect x=".5" y=".5" width="12" height="12" fill="#fff" stroke="#e4e4e4" stroke-width="1"/><path d="M0 12.500 H13" stroke="#6e6e6e" stroke-width="1"/><rect x="4.500" y="2.500" width="4" height="7.500" rx="1.200" fill="#efefef" stroke="#6e6e6e" stroke-width="1"/></svg>
<div class="b" style="left:997px;top:154px;width:47.5px;height:15px;background:#efefef;border-radius:4px;"></div>
<div class="t" style="left:1001px;top:157px;font-size:9.5px;color:#2a2a2a;letter-spacing:0.1px;-webkit-text-stroke:.14px #2a2a2a;">20</div>
<div class="t" style="left:1038.7px;top:159px;font-size:6.8px;color:#7a7a7a;transform:translateX(-50%);-webkit-text-stroke:.15px #7a7a7a;">X</div>
<div class="b" style="left:1056px;top:154px;width:47.5px;height:15px;background:#efefef;border-radius:4px;"></div>
<div class="t" style="left:1060px;top:157px;font-size:9.5px;color:#2a2a2a;letter-spacing:0.1px;-webkit-text-stroke:.14px #2a2a2a;">580</div>
<div class="t" style="left:1097.7px;top:159px;font-size:6.8px;color:#7a7a7a;transform:translateX(-50%);-webkit-text-stroke:.15px #7a7a7a;">Y</div>
<div class="b" style="left:1115.5px;top:154px;width:47.5px;height:15px;background:#efefef;border-radius:4px;"></div>
<div class="t" style="left:1119.5px;top:157px;font-size:9.5px;color:#2a2a2a;letter-spacing:0.1px;-webkit-text-stroke:.14px #2a2a2a;">0</div>
<div class="t" style="left:1157.3px;top:159px;font-size:6.8px;color:#7a7a7a;transform:translateX(-50%);-webkit-text-stroke:.15px #7a7a7a;">°</div>
<div class="b" style="left:997px;top:177.3px;width:47.5px;height:15.4px;background:#efefef;border-radius:4px;"></div>
<div class="t" style="left:1001px;top:181px;font-size:9.5px;color:#2a2a2a;letter-spacing:0.1px;-webkit-text-stroke:.14px #2a2a2a;">350</div>
<div class="t" style="left:1037.2px;top:183px;font-size:6.8px;color:#7a7a7a;transform:translateX(-50%);-webkit-text-stroke:.15px #7a7a7a;">W</div>
<div class="b" style="left:1056px;top:177.3px;width:47.5px;height:15.4px;background:#efefef;border-radius:4px;"></div>
<div class="t" style="left:1060px;top:181px;font-size:9.5px;color:#2a2a2a;letter-spacing:0.1px;-webkit-text-stroke:.14px #2a2a2a;">64</div>
<div class="t" style="left:1097.4px;top:183px;font-size:6.8px;color:#7a7a7a;transform:translateX(-50%);-webkit-text-stroke:.15px #7a7a7a;">H</div>
<svg class="b" style="left:1046.6px;top:180.4px;" width="8" height="9.5" viewBox="0 0 8 9.5"><rect x=".7" y="4.200" width="6" height="4.600" rx="1" fill="#8a8a8a"/><path d="M1.700 4.200 V2.600 Q1.700 .8 3.400 .8 Q5 .8 5.100 2.200" fill="none" stroke="#8a8a8a" stroke-width="1"/></svg>
<div class="b" style="left:1115.5px;top:177.3px;width:21.6px;height:15.4px;background:#efefef;border-radius:4px;"></div>
<div class="b" style="left:1141.4px;top:177.3px;width:21.6px;height:15.4px;background:#efefef;border-radius:4px;"></div>
<svg class="b" style="left:1120.3px;top:179.8px;" width="12" height="10.5" viewBox="0 0 12 10.5"><path d="M5 1 V9.500 H1.200Z" fill="#fff" stroke="#7a7a7a" stroke-width=".9" stroke-linejoin="round"/><path d="M7 1 V9.500 H10.800Z" fill="#e6e6e6" stroke="#7a7a7a" stroke-width=".9" stroke-linejoin="round"/></svg>
<svg class="b" style="left:1146.4px;top:179.4px;" width="12" height="11.5" viewBox="0 0 12 11.5"><path d="M1.200 5 H10.500 L1.200 1.200Z" fill="#fff" stroke="#7a7a7a" stroke-width=".9" stroke-linejoin="round"/><path d="M1.200 6.800 H10.500 L1.200 10.500Z" fill="#e6e6e6" stroke="#7a7a7a" stroke-width=".9" stroke-linejoin="round"/></svg>
<div class="b" style="left:989px;top:200.5px;width:182px;height:1px;background:#e9e9e9;"></div>
<div class="t" style="left:997px;top:210px;font-size:7.4px;color:#2e2e2e;font-weight:700;letter-spacing:0.12px;">RESIZING</div>
<svg class="b" style="left:1152px;top:209px;" width="10" height="8" viewBox="0 0 10 8"><path d="M1.9500000000000002 2.45 L5 5.55 L8.05 2.45" fill="none" stroke="#7a7a7a" stroke-width="1.05" stroke-linecap="round" stroke-linejoin="round"/></svg>
<div class="b" style="left:997px;top:225px;width:47.500px;height:36px;border-radius:4px;background:#fff;border:1px solid #e4e4e4;box-shadow:0 .5px 1.500px rgba(0,0,0,.06)"></div>
<svg class="b" style="left:997px;top:225px;" width="47.5" height="36" viewBox="0 0 47.5 36"><g stroke="#c9c9c9" stroke-width="1" fill="none"><path d="M18 4.500 H30 M24 4.500 V10 M18 31.500 H30 M24 31.500 V26 M4 13 V23.500 M4 18 H10 M43.500 13 V23.500 M43.500 18 H38"/><rect x="20" y="14.500" width="8" height="7.500"/></g></svg>
<div class="b" style="left:1056px;top:225px;width:47.500px;height:36px;border-radius:4px;background:#fff;border:1px solid #e4e4e4;box-shadow:0 .5px 1.500px rgba(0,0,0,.06)"></div>
<svg class="b" style="left:1056px;top:225px;" width="47.5" height="36" viewBox="0 0 47.5 36"><g stroke="#c9c9c9" stroke-width="1" fill="none"><path d="M4.500 18 H43.500 M4.500 15.500 V20.500 M43.500 15.500 V20.500 M24 4.500 V31.500 M21.500 4.500 H26.500 M21.500 31.500 H26.500"/></g></svg>
<div class="b" style="left:1115.5px;top:225px;width:47.500px;height:36px;border-radius:4px;background:#ededed;"></div>
<svg class="b" style="left:1115.5px;top:225px;" width="47.5" height="36" viewBox="0 0 47.5 36"><rect x="2.600" y="3.400" width="14" height="13" fill="#fff"/><rect x="7" y="7.300" width="5.400" height="5.400" fill="#e0681c"/><g fill="#9a9a9a"><circle cx="3.500" cy="4.200" r="1"/><circle cx="9.700" cy="4.200" r="1"/><circle cx="15.800" cy="4.200" r="1"/><circle cx="3.500" cy="10" r="1"/><circle cx="15.800" cy="10" r="1"/><circle cx="3.500" cy="15.700" r="1"/><circle cx="9.700" cy="15.700" r="1"/><circle cx="15.800" cy="15.700" r="1"/></g><path d="M3.500 4.200 H15.800 V15.700 H3.500Z" fill="none" stroke="#9a9a9a" stroke-width=".5" stroke-dasharray="1 1"/></svg>
<div class="t" style="left:1020.6px;top:265px;font-size:7.4px;color:#333;letter-spacing:0.1px;transform:translateX(-50%);-webkit-text-stroke:.14px #333;">Pin to Edge</div>
<div class="t" style="left:1079.6px;top:265px;font-size:7.4px;color:#333;letter-spacing:0.1px;transform:translateX(-50%);-webkit-text-stroke:.14px #333;">Fix Size</div>
<div class="t" style="left:1139.3px;top:265px;font-size:7.4px;color:#333;letter-spacing:0.1px;transform:translateX(-50%);-webkit-text-stroke:.14px #333;">Preview</div>
<div class="b" style="left:989px;top:278px;width:182px;height:1px;background:#e9e9e9;"></div>
<div class="t" style="left:997px;top:287px;font-size:7.4px;color:#2e2e2e;font-weight:700;letter-spacing:0.12px;">SYMBOL</div>
<svg class="b" style="left:1152px;top:286.8px;" width="10" height="8" viewBox="0 0 10 8"><path d="M1.9500000000000002 2.45 L5 5.55 L8.05 2.45" fill="none" stroke="#7a7a7a" stroke-width="1.05" stroke-linecap="round" stroke-linejoin="round"/></svg>
<div class="b" style="left:996.500px;top:303px;width:167px;height:29px;border-radius:4.500px;background:#fff;border:1px solid #e2e2e2;box-shadow:0 .5px 1.500px rgba(0,0,0,.07)"></div>
<div class="b" style="left:1001.3px;top:311.7px;width:10.7px;height:10.7px;background:#c2302b;border-radius:2px;"></div>
<div class="b" style="left:1005.8px;top:316.4px;width:1.6px;height:1.6px;background:#8e1f1c;border-radius:1px;"></div>
<div class="t" style="left:1014px;top:315px;font-size:2.6px;color:#777;font-weight:700;">Title</div>
<div class="t" style="left:1014px;top:319px;font-size:2.6px;color:#999;">Name</div>
<div class="t" style="left:1025.8px;top:308px;font-size:8.7px;color:#2a2a2a;-webkit-text-stroke:.14px #2a2a2a;">Small</div>
<div class="t" style="left:1025.8px;top:320px;font-size:7.5px;color:#9a9a9a;-webkit-text-stroke:.14px #9a9a9a;">This Document/Thumbnail/</div>
<svg class="b" style="left:1149.7px;top:313.7px;" width="10" height="8" viewBox="0 0 10 8"><path d="M2.8 2.8 L5 5.2 L7.2 2.8" fill="none" stroke="#7a7a7a" stroke-width="1" stroke-linecap="round" stroke-linejoin="round"/></svg>
<svg class="b" style="left:1031px;top:339px;" width="12.5" height="12.5" viewBox="0 0 12.5 12.5"><g fill="none" stroke="#7a7a7a" stroke-width="1" stroke-linecap="round"><path d="M5 7.500 L3.400 9.100 Q2.200 10.300 3.300 11.300 Q4.300 12.100 5.300 11 L6.600 9.700" transform="translate(-1.200 -.8)"/><path d="M7.500 5 L9.100 3.400 Q10.300 2.200 11.300 3.300 Q12.100 4.300 11 5.300 L9.700 6.600" transform="translate(-.2 -.4)"/><path d="M4.600 7.900 L8 4.500"/><path d="M2.200 2.200 L3.600 3.600 M1.200 4.800 H2.800 M4.800 1.200 V2.800 M10.300 10.300 L8.900 8.900 M11.300 7.700 H9.700 M7.700 11.300 V9.700" stroke-width=".8"/></g></svg>
<div class="t" style="left:1037.5px;top:356px;font-size:7.5px;color:#333;letter-spacing:0.1px;transform:translateX(-50%);-webkit-text-stroke:.14px #333;">Detach</div>
<svg class="b" style="left:1116.4px;top:338.6px;" width="12" height="13" viewBox="0 0 12 13"><defs><linearGradient id="esg" x1="0" y1="0" x2="1" y2="0"><stop offset="0" stop-color="#fff"/><stop offset="1" stop-color="#bdbdbd"/></linearGradient></defs><path d="M6 1 L10.800 6.500 L6 12 L1.200 6.500Z" fill="url(#esg)" stroke="#7a7a7a" stroke-width="1" stroke-linejoin="round"/></svg>
<div class="t" style="left:1122.5px;top:356px;font-size:7.5px;color:#333;letter-spacing:0.02px;transform:translateX(-50%);-webkit-text-stroke:.14px #333;">Edit Source</div>
<div class="b" style="left:997px;top:372px;width:166.5px;height:1px;background:#ececec;"></div>
<div class="t" style="left:997px;top:380px;font-size:8.6px;color:#8c8c8c;font-weight:700;letter-spacing:-0.1px;">Overrides</div>
<svg class="b" style="left:1150.5px;top:378.2px;" width="12" height="12" viewBox="0 0 12 12"><path d="M2.600 3.600 A4.600 4.600 0 1 1 1.500 7" fill="none" stroke="#7a7a7a" stroke-width="1" stroke-linecap="round"/><path d="M.4 3.800 L2.800 1.200 L3.600 4.600Z" fill="#7a7a7a"/></svg>
<div class="t" style="left:997px;top:398px;font-size:8.9px;color:#2a2a2a;letter-spacing:-0.05px;-webkit-text-stroke:.14px #2a2a2a;">Text Block</div>
<svg class="b" style="left:1042px;top:398px;" width="9.6" height="9.6" viewBox="0 0 9.6 9.6"><circle cx="4.800" cy="4.800" r="4.700" fill="#e6e6e6"/><path d="M2.400 4.800 H7 M5.300 3 L7.100 4.800 L5.300 6.600" fill="none" stroke="#8a8a8a" stroke-width=".9" stroke-linecap="round" stroke-linejoin="round"/></svg>
<div class="b" style="left:996.5px;top:411.5px;width:167px;height:14.5px;border-radius:4px;background:#fff;border:1px solid #e2e2e2;box-shadow:0 .5px 1.500px rgba(0,0,0,.07)"></div>
<svg class="b" style="left:1151.8px;top:415.05px;" width="10" height="8" viewBox="0 0 10 8"><path d="M2.7 2.8 L5 5.2 L7.3 2.8" fill="none" stroke="#7a7a7a" stroke-width="1" stroke-linecap="round" stroke-linejoin="round"/></svg>
<div class="t" style="left:999.4px;top:416px;font-size:2.8px;color:#666;font-weight:700;">Title</div>
<div class="t" style="left:999.4px;top:419px;font-size:2.8px;color:#999;">Name</div>
<div class="t" style="left:1012.2px;top:415px;font-size:8.9px;color:#2a2a2a;letter-spacing:-0.05px;-webkit-text-stroke:.14px #2a2a2a;">Text Block</div>
<div class="t" style="left:1004.8px;top:434px;font-size:8.9px;color:#2a2a2a;-webkit-text-stroke:.14px #2a2a2a;">Title</div>
<svg class="b" style="left:1025.6px;top:432.3px;" width="10" height="10" viewBox="0 0 10 10"><circle cx="5" cy="5" r="4.700" fill="#e4e4e4"/><path d="M5 2.700 L7.500 4.100 L5 5.500 L2.500 4.100Z" fill="#909090"/><path d="M2.700 5.500 L5 6.800 L7.300 5.500" fill="none" stroke="#909090" stroke-width=".8" stroke-linejoin="round"/></svg>
<div class="b" style="left:1004px;top:446.3px;width:159.5px;height:15.2px;background:#ececec;border-radius:4px;"></div>
<div class="t" style="left:1011px;top:450px;font-size:8.9px;color:#2a2a2a;-webkit-text-stroke:.14px #2a2a2a;">You’re Worth More than Money</div>
<div class="b" style="left:1004px;top:470.5px;width:159.5px;height:15.5px;border-radius:4px;background:#fff;border:1px solid #e2e2e2;box-shadow:0 .5px 1.500px rgba(0,0,0,.07)"></div>
<svg class="b" style="left:1151.8px;top:474.55px;" width="10" height="8" viewBox="0 0 10 8"><path d="M2.7 2.8 L5 5.2 L7.3 2.8" fill="none" stroke="#7a7a7a" stroke-width="1" stroke-linecap="round" stroke-linejoin="round"/></svg>
<div class="t" style="left:1007.5px;top:474px;font-size:8.3px;color:#333;-webkit-text-stroke:.14px #333;">Aa</div>
<div class="t" style="left:1020.4px;top:474px;font-size:8.9px;color:#2a2a2a;-webkit-text-stroke:.14px #2a2a2a;">Title</div>
<div class="t" style="left:1004.8px;top:494px;font-size:8.9px;color:#2a2a2a;-webkit-text-stroke:.14px #2a2a2a;">Author</div>
<svg class="b" style="left:1035.4px;top:492.5px;" width="10" height="10" viewBox="0 0 10 10"><circle cx="5" cy="5" r="4.900" fill="#ecd9fb"/><path d="M5 2.600 L7.600 4 L5 5.400 L2.400 4Z" fill="#9a4fd6"/><path d="M2.600 5.400 L5 6.700 L7.400 5.400" fill="none" stroke="#9a4fd6" stroke-width=".9" stroke-linejoin="round"/></svg>
<div class="b" style="left:1004px;top:506.2px;width:159.5px;height:15.4px;background:#ececec;border-radius:4px;"></div>
<div class="t" style="left:1011px;top:510px;font-size:8.9px;color:#2a2a2a;letter-spacing:0.05px;-webkit-text-stroke:.14px #2a2a2a;">Antonin Hafer</div>
<div class="b" style="left:1004px;top:530.5px;width:159.5px;height:15.7px;border-radius:4px;background:#fff;border:1px solid #e2e2e2;box-shadow:0 .5px 1.500px rgba(0,0,0,.07)"></div>
<svg class="b" style="left:1151.8px;top:534.65px;" width="10" height="8" viewBox="0 0 10 8"><path d="M2.7 2.8 L5 5.2 L7.3 2.8" fill="none" stroke="#7a7a7a" stroke-width="1" stroke-linecap="round" stroke-linejoin="round"/></svg>
<div class="t" style="left:1007.5px;top:535px;font-size:8.3px;color:#333;-webkit-text-stroke:.14px #333;">Aa</div>
<div class="t" style="left:1020.2px;top:535px;font-size:8.9px;color:#2a2a2a;letter-spacing:0.05px;-webkit-text-stroke:.14px #2a2a2a;">Subheding</div>
<div class="t" style="left:1004.8px;top:553px;font-size:8.9px;color:#2a2a2a;letter-spacing:0.05px;-webkit-text-stroke:.14px #2a2a2a;">Accent Color</div>
<div class="b" style="left:1004px;top:564px;width:39px;height:15.800px;border-radius:4px;border:1px solid #e0e0e0;background:#fff;overflow:hidden"><div style="position:absolute;left:0;top:0;width:26.500px;height:100%;background:#707070;background-image:linear-gradient(45deg,#8c8c8c 25%,transparent 25%,transparent 75%,#8c8c8c 75%),linear-gradient(45deg,#8c8c8c 25%,transparent 25%,transparent 75%,#8c8c8c 75%);background-size:8.800px 8.800px;background-position:0 0,4.400px 4.400px"></div></div>
<svg class="b" style="left:1032.5px;top:567.5px;" width="9" height="9" viewBox="0 0 9 9"><rect x=".8" y=".8" width="4.200" height="7" rx="1.300" fill="#8a3fd0"/><rect x="1.900" y="5" width="2" height="1.800" fill="#e8d4fa"/><path d="M6 2.500 L8.300 4.300 L6 6.100Z" fill="#8a3fd0"/></svg>
<div class="b" style="left:1048.3px;top:564px;width:81.6px;height:15.8px;background:#f3f3f3;border-radius:4px;"></div>
<div class="t" style="left:1052.3px;top:569px;font-size:7.8px;color:#bcbcbc;-webkit-text-stroke:.14px #bcbcbc;">#</div>
<div class="t" style="left:1059.6px;top:568px;font-size:8.9px;color:#cfcfcf;letter-spacing:0.25px;-webkit-text-stroke:.14px #cfcfcf;">000000</div>
<div class="b" style="left:1135.1px;top:564px;width:28.4px;height:15.8px;background:#f3f3f3;border-radius:4px;"></div>
<div class="t" style="left:1139px;top:568px;font-size:8.9px;color:#cfcfcf;letter-spacing:0.2px;-webkit-text-stroke:.14px #cfcfcf;">50</div>
<div class="t" style="left:1153px;top:569px;font-size:7.6px;color:#cfcfcf;-webkit-text-stroke:.14px #cfcfcf;">%</div>
<div class="t" style="left:1023.8px;top:584px;font-size:7.5px;color:#333;letter-spacing:0.1px;transform:translateX(-50%);-webkit-text-stroke:.14px #333;">Tint</div>
<div class="t" style="left:1088.7px;top:584px;font-size:7.5px;color:#333;letter-spacing:0.1px;transform:translateX(-50%);-webkit-text-stroke:.14px #333;">Hex</div>
<div class="t" style="left:1149px;top:584px;font-size:7.5px;color:#333;letter-spacing:0.1px;transform:translateX(-50%);-webkit-text-stroke:.14px #333;">Opacity</div>
<div class="t" style="left:997px;top:601px;font-size:8.9px;color:#2a2a2a;letter-spacing:0.05px;-webkit-text-stroke:.14px #2a2a2a;">Photo</div>
<svg class="b" style="left:1024px;top:598.9px;" width="10" height="10" viewBox="0 0 10 10"><circle cx="5" cy="5" r="4.700" fill="#e4e4e4"/><path d="M5 2.700 L7.500 4.100 L5 5.500 L2.500 4.100Z" fill="#909090"/><path d="M2.700 5.500 L5 6.800 L7.300 5.500" fill="none" stroke="#909090" stroke-width=".8" stroke-linejoin="round"/></svg>
<div class="b" style="left:996.500px;top:614.300px;width:132.500px;height:16px;border-radius:4px;background:#fff;border:1px solid #dedede;box-shadow:0 .5px 1.500px rgba(0,0,0,.08)"></div>
<div class="t" style="left:1062.6px;top:619px;font-size:8.9px;color:#2a2a2a;letter-spacing:0.1px;transform:translateX(-50%);-webkit-text-stroke:.14px #2a2a2a;">Choose Image...</div>
<svg class="b" style="left:1134.6px;top:614.3px;" width="29" height="16" viewBox="0 0 29 16"><defs><clipPath id="ptc"><rect width="29" height="16" rx="3.500"/></clipPath></defs><g clip-path="url(#ptc)"><rect width="29" height="16" fill="#9bc832"/><use href="#th1g" transform="translate(0 -5.500) scale(.6744)"/></g></svg>
<div class="b" style="left:989px;top:636.8px;width:182px;height:1px;background:#e9e9e9;"></div>
<div class="t" style="left:997px;top:646px;font-size:7.4px;color:#2e2e2e;font-weight:700;letter-spacing:0.12px;">APPEARANCE</div>
<svg class="b" style="left:1152px;top:645.4px;" width="10" height="8" viewBox="0 0 10 8"><path d="M1.9500000000000002 2.45 L5 5.55 L8.05 2.45" fill="none" stroke="#7a7a7a" stroke-width="1.05" stroke-linecap="round" stroke-linejoin="round"/></svg>
<div class="t" style="left:997px;top:664px;font-size:8.9px;color:#2a2a2a;-webkit-text-stroke:.14px #2a2a2a;">Opacity (Normal)</div>
<svg class="b" style="left:1069.7px;top:663px;" width="7" height="11" viewBox="0 0 7 11"><path d="M1.300 4 L3.500 1.800 L5.700 4 M1.300 7 L3.500 9.200 L5.700 7" fill="none" stroke="#7a7a7a" stroke-width=".95" stroke-linecap="round" stroke-linejoin="round"/></svg>
<div class="b" style="left:997px;top:679.7px;width:126px;height:2.2px;background:#d2691f;border-radius:1.1px;"></div>
<div class="b" style="left:1121.400px;top:676.300px;width:9px;height:9px;border-radius:50%;background:#fff;border:.8px solid #cfcfcf;box-shadow:0 .5px 1.500px rgba(0,0,0,.2)"></div>
<div class="b" style="left:1135.1px;top:673.2px;width:28.4px;height:15.2px;background:#ededed;border-radius:4px;"></div>
<div class="t" style="left:1138.5px;top:677px;font-size:8.9px;color:#2a2a2a;letter-spacing:0.1px;-webkit-text-stroke:.14px #2a2a2a;">100</div>
<div class="t" style="left:1154.6px;top:678px;font-size:7.2px;color:#555;-webkit-text-stroke:.14px #555;">%</div>
<div class="b" style="left:989px;top:697.2px;width:182px;height:1px;background:#e9e9e9;"></div>
<div class="t" style="left:997px;top:706px;font-size:7.4px;color:#2e2e2e;font-weight:700;letter-spacing:0.12px;">STYLE</div>
<svg class="b" style="left:1152px;top:705.6px;" width="10" height="8" viewBox="0 0 10 8"><path d="M1.9500000000000002 2.45 L5 5.55 L8.05 2.45" fill="none" stroke="#7a7a7a" stroke-width="1.05" stroke-linecap="round" stroke-linejoin="round"/></svg>
<div class="b" style="left:997px;top:722px;width:166.5px;height:1px;background:#ececec;"></div>
<div class="t" style="left:997px;top:730px;font-size:8.9px;color:#8c8c8c;-webkit-text-stroke:.14px #8c8c8c;">Tint</div>
<svg class="b" style="left:1133.8px;top:727.8px;" width="9.6" height="9.6" viewBox="0 0 9.6 9.6"><circle cx="4.800" cy="4.800" r="4.700" fill="#e6e6e6"/></svg>
<div class="t" style="left:1138.6px;top:730px;font-size:6.5px;color:#8a8a8a;font-weight:700;transform:translateX(-50%);">?</div>
<svg class="b" style="left:1151.3px;top:727.5px;" width="11" height="11" viewBox="0 0 11 11"><path d="M5.500 1.500 V9.500 M1.500 5.500 H9.500" stroke="#7a7a7a" stroke-width="1" stroke-linecap="round"/></svg>
</div></body></html>
